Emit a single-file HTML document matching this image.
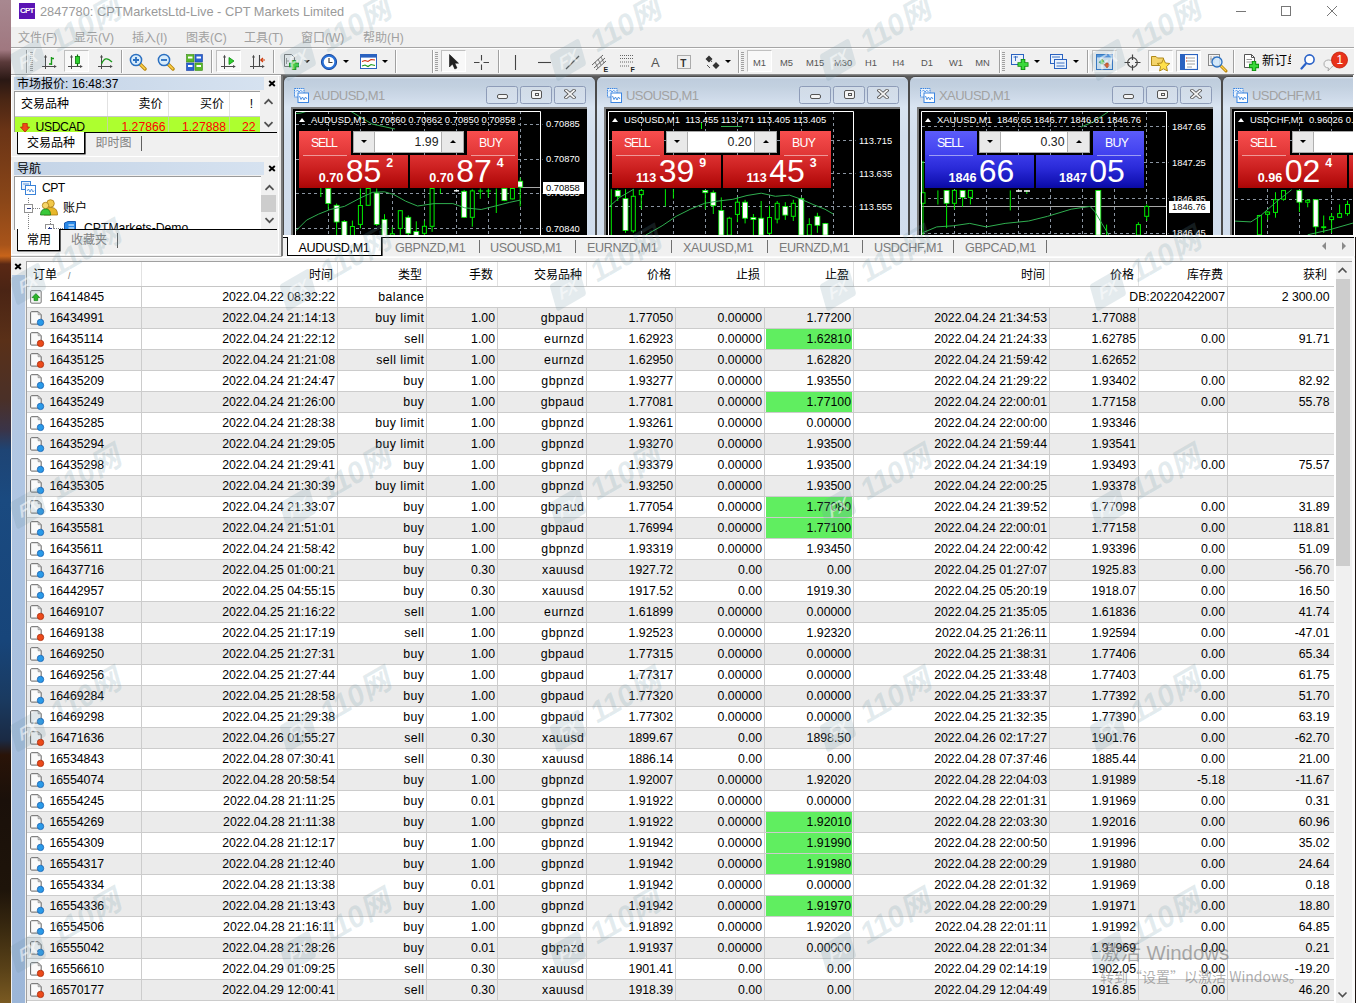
<!DOCTYPE html>
<html><head><meta charset="utf-8"><title>CPT Markets</title>
<style>
html,body{margin:0;padding:0;}
body{width:1356px;height:1003px;overflow:hidden;position:relative;background:#f0f0f0;
 font-family:"Liberation Sans","Noto Sans CJK SC",sans-serif;font-size:12px;color:#000;}
.a{position:absolute;}
.t{position:absolute;white-space:nowrap;line-height:1;}


#strip{left:0;top:0;width:11px;height:1003px;background:linear-gradient(180deg,#a88890 0px,#a07880 50px,#5a3a3a 62px,#2a1814 80px,#4a2614 100px,#6a3416 130px,#8a4618 200px,#a8541a 245px,#c8641a 256px,#5a2814 264px,#4a2414 290px,#5a3018 340px,#4a3028 400px,#3a3448 430px,#1e4474 450px,#1a4a80 500px,#17457a 640px,#1a3a60 700px,#1a2a44 740px,#2a1408 755px,#1a100a 800px,#1e140a 890px,#3a2a10 930px,#5a4218 970px,#7a5a22 1003px);}
#title{left:11px;top:0;width:1345px;height:27px;background:#fff;}
#menu{left:11px;top:27px;width:1343px;height:20px;background:#f0f0f0;}
#menur{left:1354px;top:27px;width:2px;height:50px;background:#fff;}
#tb{left:11px;top:47px;width:1343px;height:28px;background:#f0f0f0;border-top:1px solid #a6a6a6;box-sizing:border-box;}
#tb2{left:11px;top:48px;width:1343px;height:1px;background:#fff;}
.mi{position:absolute;top:32px;font-size:12px;color:#a0a0a0;white-space:nowrap;line-height:13px;}
.sep{position:absolute;top:50px;width:1px;height:23px;background:#a0a0a0;box-shadow:1px 0 0 #fff;}
.grip{position:absolute;top:52px;width:3px;height:20px;background:repeating-linear-gradient(180deg,#a0a0a0 0 1px,transparent 1px 2px);}
.pressed{position:absolute;top:50px;height:22px;box-sizing:border-box;border:1px solid #fff;background:#f8f8f8;border-top-color:#c0c0c0;border-left-color:#c0c0c0;}
.tf{position:absolute;top:57px;font-size:9.4px;color:#555;white-space:nowrap;line-height:11px;transform:translateX(-50%);}
.dd{position:absolute;top:60px;width:0;height:0;border-left:3px solid transparent;border-right:3px solid transparent;border-top:3px solid #000;}
.ico{position:absolute;}


.ptitle{position:absolute;left:14px;width:250px;height:13px;background:linear-gradient(90deg,#c3d3e6,#d6e2f0);}
.pclose{position:absolute;left:267.5px;font-size:13px;font-weight:bold;line-height:13px;}
.pframe{position:absolute;left:11px;width:268px;box-sizing:border-box;border:1px solid #fff;border-top-color:#f0f0f0;background:#f0f0f0;}
.tabact{position:absolute;box-sizing:border-box;background:#fff;border:1px solid #000;border-top:none;box-shadow:0.6px 0.4px 0 #000;}
.sarrow{position:absolute;}


#mdi{left:283px;top:75px;width:1071px;height:160px;background:#5a5a5a;overflow:hidden;}
.cw{position:absolute;top:1px;width:313px;height:170px;box-sizing:border-box;border-radius:6px 6px 0 0;background:linear-gradient(180deg,#e4ebf4 0,#bfcddd 2px,#c3d1e0 10px,#cdd9e8 20px,#d9e4f1 30px,#d3dfee 60px,#d0dcec 100%);border:1px solid #4a4a4a;border-bottom:none;}
.cw .ttl{position:absolute;left:29px;top:11px;font-size:13px;line-height:15px;color:#a2a2a2;letter-spacing:-0.55px;white-space:nowrap;}
.cbtn{position:absolute;top:9px;width:32px;height:18px;box-sizing:border-box;border:1px solid #8e9cb8;border-radius:2.5px;background:linear-gradient(180deg,rgba(255,255,255,0.25),rgba(255,255,255,0.05));}
.blk{position:absolute;left:7px;top:30px;width:296px;height:140px;background:#000;border-left:2px solid #7a7a7a;border-top:2px solid #7a7a7a;box-sizing:border-box;overflow:hidden;}
.ctx{position:absolute;font-size:9.42px;line-height:10px;color:#fff;white-space:nowrap;}
.pl{position:absolute;left:253px;font-size:9.35px;line-height:10px;color:#fff;white-space:nowrap;}
.bs{position:absolute;color:#fff;}
.red{background:linear-gradient(180deg,#dd3232 0%,#cc2020 40%,#b40c0c 85%,#a80606 100%);}
.blu{background:linear-gradient(180deg,#3c3cea 0%,#2a2ad8 40%,#1212b4 85%,#0a0aa4 100%);}
.redt{background:linear-gradient(180deg,#f84e4e 0%,#e03636 100%);}
.blut{background:linear-gradient(180deg,#5c5cfa 0%,#4040ee 100%);}
.big{position:absolute;font-size:32px;line-height:30px;color:#fff;white-space:nowrap;}
.sm{position:absolute;font-size:12.6px;font-weight:bold;line-height:12px;color:#fff;white-space:nowrap;}
.sp{position:absolute;background:#e9e9e9;border:1px solid #a8a8a8;box-sizing:border-box;}


#ctabs{left:283px;top:237px;width:1071px;height:19px;background:#f0f0f0;border-top:1px solid #000;box-sizing:border-box;}
.ctab{position:absolute;top:241.6px;font-size:12.6px;line-height:13px;color:#7a7a7a;white-space:nowrap;letter-spacing:-0.35px;}
.ctsep{position:absolute;top:240px;width:1px;height:13px;background:#707070;}


#term{left:11px;top:256px;width:1345px;height:747px;background:#f0f0f0;}
#tside{left:12px;top:275px;width:13px;height:728px;background:linear-gradient(180deg,#b8cce6,#9cb6d8);}
#tbl{left:26px;top:261px;width:1309px;height:742px;background:#fff;border-left:1px solid #a0a0a0;border-top:1px solid #a0a0a0;box-sizing:border-box;overflow:hidden;}
.row{position:absolute;left:0;width:1307px;height:21px;box-sizing:border-box;border-bottom:1px solid #cccccc;}
.row.g{background:#ebebeb;}
.c{position:absolute;top:0;height:20px;box-sizing:border-box;border-right:1px solid #cccccc;text-align:right;padding-right:2px;font-size:12.3px;line-height:20px;white-space:nowrap;}
.c.nb{border-right:none;padding-right:5.5px;}
.hd .c.nb{padding-right:7px;}
.hd .c{height:24px;line-height:26px;border-right:1px solid #e2e2e2;font-size:12px;padding-right:4px;}
.grn{position:absolute;left:1px;top:0;right:1px;bottom:0;background:#60ee60;}
.ic{position:absolute;left:3px;top:3px;width:15px;height:16px;}


.wm{position:absolute;width:0;height:0;transform:rotate(-30deg);pointer-events:none;}
.wm b{position:absolute;left:-36px;top:-17px;font-size:30px;line-height:32px;font-style:italic;font-weight:bold;color:rgba(110,150,165,0.19);white-space:nowrap;letter-spacing:-0.5px;}
.wm i{position:absolute;left:-82px;top:-13px;width:34px;height:27px;background:rgba(110,150,165,0.19);transform:skewX(-14deg);border-radius:3px;font-size:17px;line-height:27px;font-weight:bold;color:rgba(255,255,255,0.55);text-align:center;letter-spacing:-1px;}
.act{position:absolute;white-space:nowrap;color:rgba(96,96,96,0.5);}
</style></head>
<body>
<div id="strip" class="a"></div>
<div id="title" class="a"></div>
<div id="menu" class="a"></div>
<div id="tb" class="a"></div><div id="tb2" class="a"></div>
<div id="menur" class="a"></div>
<div class="a " style="left:19px;top:3px;width:16px;height:16px;background:#5a14b4;"><div class="t" style="left:1px;top:3.5px;font-size:8px;font-weight:bold;color:#fff;letter-spacing:-0.8px;">CPT</div></div>
<div class="t ttl" style="left:40px;top:4px;font-size:12.8px;color:#9a9a9a;line-height:15px;">2847780: CPTMarketsLtd-Live - CPT Markets Limited</div>
<svg class="a" style="left:1230px;top:0" width="120" height="27" viewBox="0 0 120 27"><path d="M6 11.5 H16" stroke="#777" stroke-width="1"/><rect x="51.5" y="6.5" width="9" height="9" fill="none" stroke="#777" stroke-width="1"/><path d="M97 6 L107 16 M107 6 L97 16" stroke="#777" stroke-width="1"/></svg>
<div class="mi" style="left:18px;">文件(F)</div>
<div class="mi" style="left:74px;">显示(V)</div>
<div class="mi" style="left:132px;">插入(I)</div>
<div class="mi" style="left:186px;">图表(C)</div>
<div class="mi" style="left:244px;">工具(T)</div>
<div class="mi" style="left:301px;">窗口(W)</div>
<div class="mi" style="left:363px;">帮助(H)</div>
<!--TOOLBAR-->
<div class="sep" style="left:26px"></div>
<div class="grip" style="left:30px"></div>
<svg class="ico" style="left:42px;top:54px" width="16" height="16" viewBox="0 0 16 16"><path d="M3.5 2 V15 M0 12.5 H13" stroke="#4a4a4a" stroke-width="1" fill="none"/><path d="M2 3.5 L3.5 0.8 L5 3.5 Z M12 11 L14.8 12.5 L12 14 Z" fill="#4a4a4a"/><path d="M9.5 3 V11 M9.5 4.5 H12 M7 10 H9.5" stroke="#1a9a1a" stroke-width="1.4" fill="none"/></svg>
<div class="pressed" style="left:64px;width:25px"></div>
<svg class="ico" style="left:68px;top:54px" width="16" height="16" viewBox="0 0 16 16"><path d="M3.5 2 V15 M0 12.5 H13" stroke="#4a4a4a" stroke-width="1" fill="none"/><path d="M2 3.5 L3.5 0.8 L5 3.5 Z M12 11 L14.8 12.5 L12 14 Z" fill="#4a4a4a"/><path d="M9.5 0.5 V12" stroke="#0a6a0a" stroke-width="1.2"/><rect x="7.5" y="2.5" width="4" height="7" fill="#2ed02e" stroke="#0a7a0a" stroke-width="0.8"/></svg>
<svg class="ico" style="left:98px;top:54px" width="16" height="16" viewBox="0 0 16 16"><path d="M3.5 2 V15 M0 12.5 H13" stroke="#4a4a4a" stroke-width="1" fill="none"/><path d="M2 3.5 L3.5 0.8 L5 3.5 Z M12 11 L14.8 12.5 L12 14 Z" fill="#4a4a4a"/><path d="M3.5 10 C6 4 9 3 14 8" stroke="#1a9a1a" stroke-width="1.3" fill="none"/></svg>
<div class="sep" style="left:121px"></div>
<svg class="ico" style="left:129px;top:53px" width="18" height="18" viewBox="0 0 18 18"><path d="M10.5 10.5 L16 16" stroke="#b8860b" stroke-width="3.4" stroke-linecap="round"/><path d="M10.8 10.8 L15.8 15.8" stroke="#ffd24a" stroke-width="1.6" stroke-linecap="round"/><circle cx="7" cy="7" r="5.6" fill="#d8ecfb" stroke="#2a6fc0" stroke-width="1.5"/><path d="M4 7 H10 M7 4 V10" stroke="#2a6fc0" stroke-width="1.8"/></svg>
<svg class="ico" style="left:157px;top:53px" width="18" height="18" viewBox="0 0 18 18"><path d="M10.5 10.5 L16 16" stroke="#b8860b" stroke-width="3.4" stroke-linecap="round"/><path d="M10.8 10.8 L15.8 15.8" stroke="#ffd24a" stroke-width="1.6" stroke-linecap="round"/><circle cx="7" cy="7" r="5.6" fill="#d8ecfb" stroke="#2a6fc0" stroke-width="1.5"/><path d="M4 7 H10" stroke="#2a6fc0" stroke-width="1.8"/></svg>
<svg class="ico" style="left:186px;top:54px" width="17" height="17" viewBox="0 0 17 17"><rect x="0.5" y="0.5" width="7.5" height="7.5" fill="#5ab82a" stroke="#3a8a1a" stroke-width="0.6"/><rect x="9" y="0.5" width="7.5" height="7.5" fill="#2a62d0" stroke="#1a42a0" stroke-width="0.6"/><rect x="0.5" y="9" width="7.5" height="7.5" fill="#2a62d0" stroke="#1a42a0" stroke-width="0.6"/><rect x="9" y="9" width="7.5" height="7.5" fill="#5ab82a" stroke="#3a8a1a" stroke-width="0.6"/><path d="M2 3.5 H6.5 M10.5 3.5 H15 M2 12 H6.5 M10.5 12 H15" stroke="#fff" stroke-width="2.2"/></svg>
<div class="sep" style="left:211px"></div>
<div class="pressed" style="left:216px;width:25px"></div>
<svg class="ico" style="left:221px;top:54px" width="16" height="16" viewBox="0 0 16 16"><path d="M3.5 2 V15 M0 12.5 H13" stroke="#4a4a4a" stroke-width="1" fill="none"/><path d="M2 3.5 L3.5 0.8 L5 3.5 Z M12 11 L14.8 12.5 L12 14 Z" fill="#4a4a4a"/><path d="M8 3.5 L13 7 L8 10.5 Z" fill="#2ed02e" stroke="#0a8a0a" stroke-width="0.8"/></svg>
<svg class="ico" style="left:250px;top:54px" width="16" height="16" viewBox="0 0 16 16"><path d="M3.5 2 V15 M0 12.5 H13" stroke="#4a4a4a" stroke-width="1" fill="none"/><path d="M2 3.5 L3.5 0.8 L5 3.5 Z M12 11 L14.8 12.5 L12 14 Z" fill="#4a4a4a"/><path d="M9.5 1 V12" stroke="#444" stroke-width="1.1"/><path d="M15 6 H11 M13 4 L10.8 6 L13 8" stroke="#d03a0a" stroke-width="1.2" fill="none"/></svg>
<div class="sep" style="left:273px"></div>
<svg class="ico" style="left:283px;top:53px" width="18" height="18" viewBox="0 0 18 18"><path d="M1.5 1.5 H8.5 L11.5 4.5 V13.5 H1.5 Z" fill="#f4f4f4" stroke="#777" stroke-width="1"/><path d="M3.5 5 V11 M3.5 8 H6" stroke="#999" stroke-width="1"/><path d="M11 7 V17 M6 12 H16" stroke="#0a8a0a" stroke-width="4.6"/><path d="M11 7.8 V16.2 M6.8 12 H15.2" stroke="#3ad83a" stroke-width="2.8"/></svg>
<div class="dd" style="left:304px"></div>
<svg class="ico" style="left:320px;top:53px" width="18" height="18" viewBox="0 0 18 18"><circle cx="9" cy="9" r="7.6" fill="#2a72d8" stroke="#1a4aa0" stroke-width="1"/><circle cx="9" cy="9" r="5.3" fill="#fff"/><path d="M9 5 V9.5 H12.5" stroke="#444" stroke-width="1.2" fill="none"/></svg>
<div class="dd" style="left:343px"></div>
<svg class="ico" style="left:360px;top:54px" width="17" height="16" viewBox="0 0 17 16"><rect x="0.5" y="0.5" width="16" height="14" fill="#fff" stroke="#2a62c0" stroke-width="1"/><rect x="1" y="1" width="15" height="2.6" fill="#2a62c0"/><path d="M2 7.5 L5 6.5 L8 7.5 L11 5.5 L15 6" stroke="#d02a0a" stroke-width="1.1" fill="none"/><path d="M2 12 L5 11 L8 12.5 L11 10.5 L15 11.5" stroke="#1a9a1a" stroke-width="1.1" fill="none"/></svg>
<div class="dd" style="left:382px"></div>
<div class="sep" style="left:395px"></div>
<div class="sep" style="left:432px"></div>
<div class="grip" style="left:435px"></div>
<div class="pressed" style="left:441px;width:25px"></div>
<svg class="ico" style="left:448px;top:54px" width="12" height="17" viewBox="0 0 12 17"><path d="M1.5 0.5 V13 L4.5 10 L6.8 15 L9 14 L6.8 9.2 H10.5 Z" fill="#222" stroke="#000" stroke-width="0.5"/></svg>
<svg class="ico" style="left:473px;top:54px" width="17" height="17" viewBox="0 0 17 17"><path d="M8.5 1 V6.5 M8.5 10.5 V16 M1 8.5 H6.5 M10.5 8.5 H16" stroke="#444" stroke-width="1.1"/></svg>
<div class="sep" style="left:498px"></div>
<svg class="ico" style="left:514px;top:55px" width="3" height="15" viewBox="0 0 3 15"><path d="M1.5 0 V15" stroke="#444" stroke-width="1.1"/></svg>
<svg class="ico" style="left:538px;top:61px" width="13" height="3" viewBox="0 0 13 3"><path d="M0 1.5 H13" stroke="#444" stroke-width="1.1"/></svg>
<svg class="ico" style="left:565px;top:55px" width="15" height="15" viewBox="0 0 15 15"><path d="M1 14 L14 1" stroke="#555" stroke-width="1.2"/></svg>
<svg class="ico" style="left:591px;top:53px" width="19" height="19" viewBox="0 0 19 19"><path d="M1 12 L12 2 M3 15 L14 5 M5 17 L15 8" stroke="#555" stroke-width="0.9"/><path d="M4 9 L7 15 M7 6 L10 12 M10 4 L13 10" stroke="#555" stroke-width="0.7"/><text x="12.5" y="18.5" font-size="7" font-weight="bold" font-family="Liberation Sans,sans-serif" fill="#222">E</text></svg>
<svg class="ico" style="left:620px;top:54px" width="18" height="19" viewBox="0 0 18 19"><path d="M0 1.5 H14 M0 4.5 H14 M0 8 H14 M0 12 H9" stroke="#555" stroke-width="0.9" stroke-dasharray="1 1"/><text x="10.5" y="17.5" font-size="7" font-weight="bold" font-family="Liberation Sans,sans-serif" fill="#222">F</text></svg>
<div class="t " style="left:651px;top:55.5px;font-size:13px;color:#555;">A</div>
<svg class="ico" style="left:677px;top:55px" width="15" height="15" viewBox="0 0 15 15"><rect x="0.5" y="0.5" width="13" height="13" fill="none" stroke="#555" stroke-width="0.9" stroke-dasharray="1 1"/><text x="3.2" y="11.5" font-size="10" font-weight="bold" font-family="Liberation Sans,sans-serif" fill="#333">T</text></svg>
<svg class="ico" style="left:704px;top:54px" width="18" height="17" viewBox="0 0 18 17"><path d="M5 1.5 L8.5 5 L5 8.5 L1.5 5 Z M12 8 L15.5 11.5 L12 15 L8.5 11.5 Z" fill="#333"/><path d="M3 11 L6 14 M5.5 5 L8 8" stroke="#555" stroke-width="1"/></svg>
<div class="dd" style="left:725px"></div>
<div class="sep" style="left:738px"></div>
<div class="grip" style="left:741px"></div>
<div class="pressed" style="left:747px;width:25px"></div>
<div class="tf" style="left:759.5px">M1</div>
<div class="tf" style="left:786.5px">M5</div>
<div class="tf" style="left:815px">M15</div>
<div class="tf" style="left:843px">M30</div>
<div class="tf" style="left:871px">H1</div>
<div class="tf" style="left:898.5px">H4</div>
<div class="tf" style="left:927px">D1</div>
<div class="tf" style="left:956px">W1</div>
<div class="tf" style="left:982.5px">MN</div>
<div class="sep" style="left:999px"></div>
<div class="grip" style="left:1002px"></div>
<svg class="ico" style="left:1011px;top:53px" width="18" height="18" viewBox="0 0 18 18"><rect x="0.5" y="1.5" width="12" height="10" fill="#eaf2fc" stroke="#2a62c0" stroke-width="1"/><path d="M2.5 4 H7 M4.5 3 V8" stroke="#2a62c0" stroke-width="0.9"/><path d="M12 6 V17 M6.5 11.5 H17.5" stroke="#0a8a0a" stroke-width="4.6"/><path d="M12 6.8 V16.2 M7.3 11.5 H16.7" stroke="#3ad83a" stroke-width="2.8"/></svg>
<div class="dd" style="left:1034px"></div>
<svg class="ico" style="left:1050px;top:53px" width="18" height="18" viewBox="0 0 18 18"><rect x="0.5" y="1.5" width="12" height="9" fill="#eaf2fc" stroke="#2a62c0" stroke-width="1"/><rect x="4.5" y="6.5" width="12" height="9" fill="#eaf2fc" stroke="#2a62c0" stroke-width="1"/><path d="M2 4 H10 M6.5 10 H14.5 M6.5 13 H14.5" stroke="#2a62c0" stroke-width="0.9"/></svg>
<div class="dd" style="left:1073px"></div>
<div class="sep" style="left:1087px"></div>
<div class="pressed" style="left:1092px;width:25px"></div>
<svg class="ico" style="left:1096px;top:54px" width="17" height="16" viewBox="0 0 17 16"><rect x="0.5" y="0.5" width="16" height="15" fill="#dcecfb" stroke="#2a72c8" stroke-width="1"/><rect x="1" y="1" width="15" height="2.4" fill="#4a92e0"/><path d="M6 5 L8.8 8.4 H7.2 V10 H4.8 V8.4 H3.2 Z" fill="#2aba2a" stroke="#0a7a0a" stroke-width="0.5"/><path d="M11 14 L8.2 10.6 H9.8 V9 H12.2 V10.6 H13.8 Z" fill="#f05a1a" stroke="#a02a00" stroke-width="0.5"/></svg>
<svg class="ico" style="left:1124px;top:54px" width="17" height="17" viewBox="0 0 17 17"><circle cx="8.5" cy="8.5" r="4.8" fill="none" stroke="#444" stroke-width="1.2"/><path d="M8.5 0.5 V6 M8.5 11 V16.5 M0.5 8.5 H6 M11 8.5 H16.5" stroke="#444" stroke-width="1.2"/></svg>
<div class="pressed" style="left:1148px;width:25px"></div>
<svg class="ico" style="left:1151px;top:53px" width="20" height="19" viewBox="0 0 20 19"><path d="M0.5 3.5 H5 L6.5 5 H12.5 V12.5 H0.5 Z" fill="#f4d46a" stroke="#b08a1a" stroke-width="1"/><path d="M12.5 6 L14.4 10 L18.8 10.5 L15.5 13.5 L16.4 18 L12.5 15.8 L8.6 18 L9.5 13.5 L6.2 10.5 L10.6 10 Z" fill="#ffe04a" stroke="#b08a1a" stroke-width="1"/></svg>
<div class="pressed" style="left:1176px;width:25px"></div>
<svg class="ico" style="left:1180px;top:54px" width="18" height="16" viewBox="0 0 18 16"><rect x="0.5" y="0.5" width="17" height="15" fill="#fff" stroke="#2a62c0" stroke-width="1.2"/><rect x="1" y="1" width="4" height="14" fill="#2a62c0"/><path d="M7 4 H15 M7 7 H15 M7 10 H15 M7 13 H12" stroke="#888" stroke-width="0.8"/><path d="M6 4 H7 M6 7 H7" stroke="#d02a0a" stroke-width="1"/></svg>
<svg class="ico" style="left:1208px;top:53px" width="20" height="20" viewBox="0 0 20 20"><rect x="0.5" y="1.5" width="11" height="11" fill="#f4f4f4" stroke="#888" stroke-width="1"/><path d="M3 3 V10 M6 3 V10 M2 6 H8" stroke="#999" stroke-width="0.8"/><path d="M12.5 12.5 L18 18" stroke="#b8860b" stroke-width="3" stroke-linecap="round"/><path d="M12.8 12.8 L17.6 17.6" stroke="#ffd24a" stroke-width="1.3" stroke-linecap="round"/><circle cx="9" cy="9" r="5" fill="#cfe6fa" fill-opacity="0.85" stroke="#2a6fc0" stroke-width="1.3"/></svg>
<div class="sep" style="left:1233px"></div>
<svg class="ico" style="left:1243px;top:53px" width="18" height="19" viewBox="0 0 18 19"><path d="M1.5 1.5 H8.5 L11.5 4.5 V14.5 H1.5 Z" fill="#fff" stroke="#555" stroke-width="1"/><path d="M8.5 1.5 V4.5 H11.5" fill="none" stroke="#555"/><path d="M3.5 6.5 H9 M3.5 9 H9" stroke="#888" stroke-width="0.9"/><path d="M11 8 V18 M6 13 H16" stroke="#0a8a0a" stroke-width="4.4"/><path d="M11 8.8 V17.2 M6.8 13 H15.2" stroke="#3ad83a" stroke-width="2.6"/></svg>
<div class="a" style="left:1262px;top:53px;width:29px;height:16px;overflow:hidden;"><div class="t" style="left:0;top:1px;font-size:12.5px;line-height:14px;">新订单</div></div>
<svg class="ico" style="left:1300px;top:53px" width="16" height="17" viewBox="0 0 16 17"><path d="M6 10.5 L1.5 15.5" stroke="#2a62c8" stroke-width="2.2" stroke-linecap="round"/><circle cx="9.5" cy="6.5" r="4.6" fill="#fff" stroke="#2a62c8" stroke-width="1.6"/></svg>
<svg class="ico" style="left:1322px;top:50px" width="28" height="24" viewBox="0 0 28 24"><path d="M2 14 a5 4 0 1 1 7 3.6 L6 21 L6.5 18 A5 4 0 0 1 2 14 Z" fill="#f4f4f4" stroke="#aaa" stroke-width="1"/><circle cx="17.5" cy="10" r="8" fill="#e8321a"/><circle cx="17.5" cy="10" r="8" fill="none" stroke="#c0200a" stroke-width="0.8"/><text x="14.6" y="14.4" font-size="12" font-family="Liberation Sans,sans-serif" fill="#fff">1</text></svg>
<div class="a " style="left:281px;top:76px;width:2px;height:180px;background:#7a7a7a;"></div>
<div class="a " style="left:279px;top:76px;width:2px;height:180px;background:#e8e8e8;"></div>
<div class="pframe" style="top:76px;height:81px;"></div>
<div class="ptitle" style="top:77px;"></div>
<div class="t " style="left:17px;top:77.5px;font-size:12px;line-height:12px;">市场报价: 16:48:37</div>
<svg class="a" style="left:268px;top:80px" width="8" height="7" viewBox="0 0 8 7"><path d="M1.2 1 L6.8 6 M6.8 1 L1.2 6" stroke="#000" stroke-width="1.9"/></svg>
<div class="a " style="left:14px;top:91px;width:246px;height:41px;background:#fff;border-left:1px solid #9a9a9a;border-top:1px solid #9a9a9a;box-sizing:border-box;"></div>
<div class="a " style="left:260px;top:92px;width:18px;height:40px;background:#f0f0f0;"></div>
<div class="a " style="left:107px;top:92px;width:1px;height:24px;background:#e2e2e2;"></div>
<div class="a " style="left:168px;top:92px;width:1px;height:24px;background:#e2e2e2;"></div>
<div class="a " style="left:229px;top:92px;width:1px;height:24px;background:#e2e2e2;"></div>
<div class="a " style="left:15px;top:116px;width:245px;height:1px;background:#c8c8c8;"></div>
<div class="a " style="left:15px;top:117px;width:245px;height:15px;background:#adff2f;"></div>
<div class="a " style="left:107px;top:117px;width:1px;height:15px;background:#c4d89a;"></div>
<div class="a " style="left:168px;top:117px;width:1px;height:15px;background:#c4d89a;"></div>
<div class="a " style="left:229px;top:117px;width:1px;height:15px;background:#c4d89a;"></div>
<div class="t " style="left:21px;top:98px;font-size:12px;line-height:12px;">交易品种</div>
<div class="t " style="right:1193.5px;top:98px;font-size:12px;line-height:12px;">卖价</div>
<div class="t " style="right:1132px;top:98px;font-size:12px;line-height:12px;">买价</div>
<div class="t " style="right:1103px;top:98px;font-size:12px;line-height:12px;">!</div>
<div class="a" style="left:15px;top:117px;width:245px;height:15px;overflow:hidden;"><svg class="a" style="left:4.5px;top:6px" width="10" height="10" viewBox="0 0 11 11"><path d="M3 0.5 H8 V4.5 H10.5 L5.5 10 L0.5 4.5 H3 Z" fill="#f04a1a" stroke="#b02000" stroke-width="0.8"/></svg><div class="t" style="left:20.5px;top:4px;font-size:12.2px;line-height:13px;letter-spacing:-0.4px;">USDCAD</div><div class="t" style="right:94.5px;top:4px;font-size:12.2px;line-height:13px;color:#f00;">1.27866</div><div class="t" style="right:34px;top:4px;font-size:12.2px;line-height:13px;color:#f00;">1.27888</div><div class="t" style="right:4.5px;top:4px;font-size:12.2px;line-height:13px;color:#f00;">22</div></div>
<svg class="sarrow" style="left:263px;top:98px" width="11" height="7" viewBox="0 0 11 7"><path d="M1.5 5.8 L5.5 1.8 L9.5 5.8" fill="none" stroke="#505050" stroke-width="1.7"/></svg>
<svg class="sarrow" style="left:263px;top:121px" width="11" height="7" viewBox="0 0 11 7"><path d="M1.5 1.2 L5.5 5.2 L9.5 1.2" fill="none" stroke="#505050" stroke-width="1.7"/></svg>
<div class="a " style="left:84px;top:132px;width:193px;height:1px;background:#000;"></div>
<div class="tabact" style="left:17px;top:132px;width:68px;height:21.5px;"></div>
<div class="t " style="left:27px;top:137px;font-size:12px;line-height:12px;">交易品种</div>
<div class="t " style="left:95.5px;top:137px;font-size:12px;line-height:12px;color:#808080;">即时图</div>
<div class="a " style="left:141px;top:136px;width:1px;height:15px;background:#606060;"></div>
<div class="pframe" style="top:160px;height:95px;"></div>
<div class="ptitle" style="top:162px;"></div>
<div class="t " style="left:17px;top:162.5px;font-size:12px;line-height:12px;">导航</div>
<svg class="a" style="left:268px;top:165px" width="8" height="7" viewBox="0 0 8 7"><path d="M1.2 1 L6.8 6 M6.8 1 L1.2 6" stroke="#000" stroke-width="1.9"/></svg>
<div class="a " style="left:14px;top:176px;width:247px;height:54px;background:#fff;border-left:1px solid #9a9a9a;border-top:1px solid #9a9a9a;box-sizing:border-box;"></div>
<div class="a " style="left:261px;top:177px;width:17px;height:53px;background:#f0f0f0;"></div>
<div class="a " style="left:261px;top:195px;width:15px;height:17px;background:#cdcdcd;"></div>
<svg class="sarrow" style="left:263.5px;top:183.5px" width="11" height="7" viewBox="0 0 11 7"><path d="M1.5 5.8 L5.5 1.8 L9.5 5.8" fill="none" stroke="#505050" stroke-width="1.7"/></svg>
<svg class="sarrow" style="left:263.5px;top:217px" width="11" height="7" viewBox="0 0 11 7"><path d="M1.5 1.2 L5.5 5.2 L9.5 1.2" fill="none" stroke="#505050" stroke-width="1.7"/></svg>
<svg class="a" style="left:21px;top:180.5px" width="15" height="14" viewBox="0 0 15 14"><rect x="0.5" y="0.5" width="9" height="8" fill="#e8f2fc" stroke="#3a82d8" stroke-width="1"/><path d="M2 3 H8" stroke="#3a82d8" stroke-width="0.8"/><rect x="4.5" y="4.5" width="10" height="9" fill="#fff" stroke="#3a82d8" stroke-width="1"/><path d="M6 10 L7.5 8 L9 11 L10.5 8 L12 11 L13 9.5" stroke="#3a82d8" stroke-width="0.8" fill="none"/></svg>
<div class="t " style="left:42px;top:182px;font-size:12.2px;line-height:13px;letter-spacing:-0.6px;">CPT</div>
<div class="a " style="left:28px;top:198px;width:1px;height:32px;background:repeating-linear-gradient(180deg,#808080 0 1px,transparent 1px 2px);"></div>
<div class="a " style="left:33px;top:208px;width:7px;height:1px;background:repeating-linear-gradient(90deg,#808080 0 1px,transparent 1px 2px);"></div>
<div class="a " style="left:24px;top:203.5px;width:9px;height:9px;background:#fff;border:1px solid #919191;box-sizing:border-box;"><div class="a" style="left:1.5px;top:3px;width:4px;height:1px;background:#2a3a8a;"></div></div>
<svg class="a" style="left:40px;top:199px" width="18" height="17" viewBox="0 0 18 17"><circle cx="10.5" cy="4.5" r="3.8" fill="#f2c84a" stroke="#a87a10" stroke-width="0.8"/><path d="M4 16 C4 10 7 8.5 10.5 8.5 C14.5 8.5 17.5 10 17.5 16 Z" fill="#e8b82a" stroke="#a87a10" stroke-width="0.8"/><circle cx="5.5" cy="6.5" r="3.2" fill="#f6d66a" stroke="#a87a10" stroke-width="0.8"/><path d="M0.5 16 C0.5 11.5 3 10 5.5 10 C8.5 10 10.5 11.5 10.5 16 Z" fill="#3ac83a" stroke="#1a7a1a" stroke-width="0.8"/></svg>
<div class="t " style="left:63px;top:202px;font-size:12px;line-height:12px;">账户</div>
<div class="a" style="left:15px;top:219px;width:246px;height:11px;overflow:hidden;"><div class="a" style="left:30px;top:5px;width:9px;height:9px;background:#fff;border:1px solid #919191;box-sizing:border-box;"><div class="a" style="left:1.5px;top:3px;width:4px;height:1px;background:#2a3a8a;"></div><div class="a" style="left:3px;top:1.5px;width:1px;height:4px;background:#2a3a8a;"></div></div><div class="a" style="left:39px;top:9px;width:9px;height:1px;background:repeating-linear-gradient(90deg,#808080 0 1px,transparent 1px 2px);"></div><div class="a" style="left:34.5px;top:0;width:1px;height:5px;background:repeating-linear-gradient(180deg,#808080 0 1px,transparent 1px 2px);"></div><svg class="a" style="left:49px;top:2px" width="13" height="12" viewBox="0 0 13 12"><path d="M0.5 2 L4 0.5 H11.5 V12 H0.5 Z" fill="#2a8ae8" stroke="#1a5ab0" stroke-width="1"/><path d="M4.5 4 H10 M4.5 7 H10 M4.5 10 H10" stroke="#fff" stroke-width="1.1"/></svg><div class="t" style="left:69px;top:3px;font-size:12.2px;line-height:13px;">CPTMarkets-Demo</div></div>
<div class="a " style="left:59px;top:229px;width:218px;height:1px;background:#000;"></div>
<div class="tabact" style="left:17px;top:229px;width:43px;height:22px;"></div>
<div class="t " style="left:27px;top:234px;font-size:12px;line-height:12px;">常用</div>
<div class="t " style="left:71px;top:234px;font-size:12px;line-height:12px;color:#808080;">收藏夹</div>
<div class="a " style="left:117px;top:233px;width:1px;height:15px;background:#606060;"></div>
<div id="mdi" class="a"><div class="cw" style="left:0px;"><svg class="a" style="left:10px;top:11px" width="15" height="15" viewBox="0 0 15 15"><rect x="0.5" y="0.5" width="9.5" height="8.5" fill="#eaf3fd" stroke="#3a84e0" stroke-width="1" stroke-dasharray="1.5 0.7"/><path d="M2 3.5 L3.5 2 L5 4 L6.5 2.5 L8.5 3.5" stroke="#3a84e0" stroke-width="0.8" fill="none"/><rect x="4" y="5" width="10.5" height="9.5" fill="#fff" stroke="#3a84e0" stroke-width="1"/><path d="M5.5 8 L7 11.5 L8.5 9 L10 12 L11.5 9 L13 11" stroke="#3a84e0" stroke-width="0.9" fill="none"/></svg><div class="ttl">AUDUSD,M1</div><div class="cbtn" style="left:202px;"><div class="a" style="left:9.5px;top:6.8px;width:11px;height:5px;border:1px solid #555;border-radius:2px;background:#f4f4f4;box-sizing:border-box;"></div></div><div class="cbtn" style="left:236px;"><div class="a" style="left:10px;top:2.8px;width:11px;height:9px;border:1px solid #555;border-radius:2px;background:#f4f4f4;box-sizing:border-box;"><div class="a" style="left:2.5px;top:2px;width:4px;height:3px;border:1px solid #555;box-sizing:border-box;"></div></div></div><div class="cbtn" style="left:270px;"><svg class="a" style="left:9px;top:2.4px" width="12" height="10" viewBox="0 0 12 10"><path d="M2 1.5 L10 8.5 M10 1.5 L2 8.5" stroke="#555" stroke-width="3.4" stroke-linecap="square"/><path d="M2 1.5 L10 8.5 M10 1.5 L2 8.5" stroke="#f4f4f4" stroke-width="1.7" stroke-linecap="square"/></svg></div><div class="blk"><svg class="a" style="left:0;top:0" width="294" height="140" viewBox="0 0 294 140"><path d="M35.5 2 V140" stroke="#8a94a0" stroke-width="1" stroke-dasharray="3 3"/><path d="M67.5 2 V140" stroke="#8a94a0" stroke-width="1" stroke-dasharray="3 3"/><path d="M99.5 2 V140" stroke="#8a94a0" stroke-width="1" stroke-dasharray="3 3"/><path d="M131.5 2 V140" stroke="#8a94a0" stroke-width="1" stroke-dasharray="3 3"/><path d="M163.5 2 V140" stroke="#8a94a0" stroke-width="1" stroke-dasharray="3 3"/><path d="M195.5 2 V140" stroke="#8a94a0" stroke-width="1" stroke-dasharray="3 3"/><path d="M227.5 2 V140" stroke="#8a94a0" stroke-width="1" stroke-dasharray="3 3"/><path d="M3 15.5 H249.5" stroke="#8a94a0" stroke-width="1" stroke-dasharray="3 3"/><path d="M3 50.5 H249.5" stroke="#8a94a0" stroke-width="1" stroke-dasharray="3 3"/><path d="M3 84.5 H249.5" stroke="#8a94a0" stroke-width="1" stroke-dasharray="3 3"/><path d="M3 119.5 H249.5" stroke="#8a94a0" stroke-width="1" stroke-dasharray="3 3"/><path d="M227 78.5 H247.5" stroke="#a8a8a8" stroke-width="1"/><path d="M27.8 78.1 V88" stroke="#00ee00" stroke-width="1"/><path d="M35.3 78.1 V100.5" stroke="#00ee00" stroke-width="1"/><rect x="32.8" y="79.5" width="5" height="15.1" fill="#fff" stroke="#00ee00" stroke-width="0.8"/><path d="M43.6 94.6 V126.5" stroke="#00ee00" stroke-width="1"/><rect x="41.1" y="96.3" width="5" height="16.7" fill="#fff" stroke="#00ee00" stroke-width="0.8"/><path d="M51.4 111.1 V126.5" stroke="#00ee00" stroke-width="1"/><rect x="48.9" y="112.5" width="5" height="14" fill="#fff" stroke="#00ee00" stroke-width="0.8"/><path d="M59.4 111.6 V126.5" stroke="#00ee00" stroke-width="1"/><rect x="57.4" y="117.5" width="4" height="9" fill="#000" stroke="#00ee00" stroke-width="1"/><path d="M67.4 79.5 V119.4" stroke="#00ee00" stroke-width="1"/><rect x="65.4" y="96.5" width="4" height="18.9" fill="#000" stroke="#00ee00" stroke-width="1"/><path d="M75.2 78.1 V97" stroke="#00ee00" stroke-width="1"/><rect x="73.2" y="79.5" width="4" height="16.8" fill="#000" stroke="#00ee00" stroke-width="1"/><path d="M83.7 79.5 V117" stroke="#00ee00" stroke-width="1"/><rect x="81.2" y="84" width="5" height="31.4" fill="#fff" stroke="#00ee00" stroke-width="0.8"/><path d="M91.5 105.2 V126.5" stroke="#00ee00" stroke-width="1"/><rect x="89" y="110.6" width="5" height="15.9" fill="#fff" stroke="#00ee00" stroke-width="0.8"/><path d="M99.3 118.2 V126.5" stroke="#00ee00" stroke-width="1"/><rect x="97.3" y="124.8" width="4" height="1.7" fill="#000" stroke="#00ee00" stroke-width="1"/><path d="M107.3 101.2 V126.5" stroke="#00ee00" stroke-width="1"/><rect x="105.3" y="101.7" width="4" height="17.7" fill="#000" stroke="#00ee00" stroke-width="1"/><path d="M115.3 106.4 V126.5" stroke="#00ee00" stroke-width="1"/><rect x="112.8" y="108.3" width="5" height="16" fill="#fff" stroke="#00ee00" stroke-width="0.8"/><path d="M123.3 112.3 V126.5" stroke="#00ee00" stroke-width="1"/><rect x="120.8" y="122.4" width="5" height="4.1" fill="#fff" stroke="#00ee00" stroke-width="0.8"/><path d="M131.4 111.6 V126.5" stroke="#00ee00" stroke-width="1"/><rect x="129.4" y="117.3" width="4" height="7" fill="#000" stroke="#00ee00" stroke-width="1"/><path d="M139.1 79.5 V122.9" stroke="#00ee00" stroke-width="1"/><rect x="137.1" y="79.5" width="4" height="37.8" fill="#000" stroke="#00ee00" stroke-width="1"/><path d="M147.4 79.5 V84.7" stroke="#00ee00" stroke-width="1"/><path d="M171.2 80.9 V108.8" stroke="#00ee00" stroke-width="1"/><rect x="168.7" y="82.3" width="5" height="26" fill="#fff" stroke="#00ee00" stroke-width="0.8"/><path d="M179.3 80.4 V117.7" stroke="#00ee00" stroke-width="1"/><rect x="177.3" y="81.9" width="4" height="26.4" fill="#000" stroke="#00ee00" stroke-width="1"/><path d="M187.3 79.5 V89.9" stroke="#00ee00" stroke-width="1"/><path d="M195.3 79.5 V88.5" stroke="#00ee00" stroke-width="1"/><path d="M203.3 79.5 V104" stroke="#00ee00" stroke-width="1"/><path d="M211.4 79.5 V92.2" stroke="#00ee00" stroke-width="1"/><rect x="208.9" y="79.5" width="5" height="12" fill="#fff" stroke="#00ee00" stroke-width="0.8"/><path d="M219.4 79.5 V90.4" stroke="#00ee00" stroke-width="1"/><rect x="217.4" y="79.5" width="4" height="10.4" fill="#000" stroke="#00ee00" stroke-width="1"/><path d="M227.2 68.6 V97.4" stroke="#00ee00" stroke-width="1"/><rect x="224.7" y="72.2" width="5" height="5.9" fill="#fff" stroke="#00ee00" stroke-width="0.8"/><path d="M3 121.7 L13.6 111.1 L25.4 105.2 L37.2 100.5 L51.4 97.4 L67.9 88.7 L79.7 83.3 L91.5 82.8 L100.9 85.6 L112.7 92.2 L124.5 97 L141 94.6 L159.9 94.6 L171.7 98.8 L188.2 100.5 L202.4 97 L216.5 93.4 L227.2 91.1" fill="none" stroke="#2fae4f" stroke-width="1"/><path d="M3 4.5 L8 4 L13 2.5 M58 2.5 L69 9 L79 15 L102 20" fill="none" stroke="#2fae4f" stroke-width="1"/><path d="M185 82 H190 M193 82 H198" stroke="#00ee00" stroke-width="1"/><path d="M161 81.8 H166" stroke="#fff" stroke-width="1.4"/><path d="M2.5 140 V2.5 H247.5 V140" fill="none" stroke="#fff" stroke-width="1"/></svg><div class="a" style="left:6px;top:9px;width:0;height:0;border-left:3.5px solid transparent;border-right:3.5px solid transparent;border-bottom:4px solid #fff;"></div><div class="ctx" style="left:18px;top:6px;">AUDUSD,M1&nbsp; 0.70860 0.70862 0.70850 0.70858</div><div class="pl" style="top:10px;">0.70885</div><div class="pl" style="top:45px;">0.70870</div><div class="pl" style="top:79px;">0.70855</div><div class="a" style="left:250px;top:72.5px;width:41px;height:12px;background:#fff;"></div><div class="pl" style="top:73.5px;color:#000;">0.70858</div><div class="pl" style="top:114.5px;">0.70840</div><div class="a red" style="left:6px;top:46px;width:108.5px;height:33px;"></div><div class="a red" style="left:116.5px;top:46px;width:108.5px;height:33px;"></div><div class="a redt" style="left:6px;top:22px;width:52px;height:24px;"></div><div class="a redt" style="left:174px;top:22px;width:51px;height:24px;"></div><div class="a" style="left:10px;top:46px;width:44px;height:1px;background:rgba(255,255,255,0.5);"></div><div class="a" style="left:177.5px;top:46px;width:44px;height:1px;background:rgba(255,255,255,0.5);"></div><div class="bs" style="left:18px;top:27.5px;font-size:12.3px;line-height:13px;letter-spacing:-1.1px;">SELL</div><div class="bs" style="left:186px;top:27.5px;font-size:12.3px;line-height:13px;letter-spacing:-0.7px;">BUY</div><div class="sp" style="left:59.7px;top:22px;width:111.5px;height:22px;"></div><div class="a" style="left:81px;top:23px;width:68px;height:20px;background:#fff;border-left:1px solid #b0b0b0;border-right:1px solid #b0b0b0;box-sizing:border-box;"></div><div class="a" style="left:68px;top:31px;width:0;height:0;border-left:3px solid transparent;border-right:3px solid transparent;border-top:3.5px solid #000;"></div><div class="a" style="left:157px;top:30.5px;width:0;height:0;border-left:3px solid transparent;border-right:3px solid transparent;border-bottom:3.5px solid #000;"></div><div class="t" style="right:148.5px;top:26.5px;font-size:12.3px;line-height:13px;color:#222;">1.99</div><div class="sm" style="right:243.8px;top:63.4px;">0.70</div><div class="big" style="left:52.7px;top:47.2px;">85</div><div class="sm" style="left:93.2px;top:47.6px;font-size:12.4px;">2</div><div class="sm" style="right:133.3px;top:63.4px;">0.70</div><div class="big" style="left:163.2px;top:47.2px;">87</div><div class="sm" style="left:203.7px;top:47.6px;font-size:12.4px;">4</div></div></div><div class="cw" style="left:313px;"><svg class="a" style="left:10px;top:11px" width="15" height="15" viewBox="0 0 15 15"><rect x="0.5" y="0.5" width="9.5" height="8.5" fill="#eaf3fd" stroke="#3a84e0" stroke-width="1" stroke-dasharray="1.5 0.7"/><path d="M2 3.5 L3.5 2 L5 4 L6.5 2.5 L8.5 3.5" stroke="#3a84e0" stroke-width="0.8" fill="none"/><rect x="4" y="5" width="10.5" height="9.5" fill="#fff" stroke="#3a84e0" stroke-width="1"/><path d="M5.5 8 L7 11.5 L8.5 9 L10 12 L11.5 9 L13 11" stroke="#3a84e0" stroke-width="0.9" fill="none"/></svg><div class="ttl">USOUSD,M1</div><div class="cbtn" style="left:202px;"><div class="a" style="left:9.5px;top:6.8px;width:11px;height:5px;border:1px solid #555;border-radius:2px;background:#f4f4f4;box-sizing:border-box;"></div></div><div class="cbtn" style="left:236px;"><div class="a" style="left:10px;top:2.8px;width:11px;height:9px;border:1px solid #555;border-radius:2px;background:#f4f4f4;box-sizing:border-box;"><div class="a" style="left:2.5px;top:2px;width:4px;height:3px;border:1px solid #555;box-sizing:border-box;"></div></div></div><div class="cbtn" style="left:270px;"><svg class="a" style="left:9px;top:2.4px" width="12" height="10" viewBox="0 0 12 10"><path d="M2 1.5 L10 8.5 M10 1.5 L2 8.5" stroke="#555" stroke-width="3.4" stroke-linecap="square"/><path d="M2 1.5 L10 8.5 M10 1.5 L2 8.5" stroke="#f4f4f4" stroke-width="1.7" stroke-linecap="square"/></svg></div><div class="blk"><svg class="a" style="left:0;top:0" width="294" height="140" viewBox="0 0 294 140"><path d="M35.5 2 V140" stroke="#8a94a0" stroke-width="1" stroke-dasharray="3 3"/><path d="M67.5 2 V140" stroke="#8a94a0" stroke-width="1" stroke-dasharray="3 3"/><path d="M99.5 2 V140" stroke="#8a94a0" stroke-width="1" stroke-dasharray="3 3"/><path d="M131.5 2 V140" stroke="#8a94a0" stroke-width="1" stroke-dasharray="3 3"/><path d="M163.5 2 V140" stroke="#8a94a0" stroke-width="1" stroke-dasharray="3 3"/><path d="M195.5 2 V140" stroke="#8a94a0" stroke-width="1" stroke-dasharray="3 3"/><path d="M227.5 2 V140" stroke="#8a94a0" stroke-width="1" stroke-dasharray="3 3"/><path d="M3 31.5 H249.5" stroke="#8a94a0" stroke-width="1" stroke-dasharray="3 3"/><path d="M3 64.5 H249.5" stroke="#8a94a0" stroke-width="1" stroke-dasharray="3 3"/><path d="M3 97.5 H249.5" stroke="#8a94a0" stroke-width="1" stroke-dasharray="3 3"/><path d="M5.3 80.2 V126.2" stroke="#00ee00" stroke-width="1"/><path d="M11.7 80.2 V92" stroke="#00ee00" stroke-width="1"/><rect x="9.2" y="81.4" width="5" height="5.9" fill="#fff" stroke="#00ee00" stroke-width="0.8"/><path d="M19.5 80.2 V123.8" stroke="#00ee00" stroke-width="1"/><rect x="17" y="89.6" width="5" height="31.9" fill="#fff" stroke="#00ee00" stroke-width="0.8"/><path d="M27.3 80.2 V123.8" stroke="#00ee00" stroke-width="1"/><rect x="25.3" y="87.3" width="4" height="34.6" fill="#000" stroke="#00ee00" stroke-width="1"/><path d="M35.3 80.2 V100.2" stroke="#00ee00" stroke-width="1"/><rect x="33.3" y="81.4" width="4" height="4.2" fill="#000" stroke="#00ee00" stroke-width="1"/><path d="M59.4 80.2 V97.4" stroke="#00ee00" stroke-width="1"/><path d="M67.4 80.2 V89.6" stroke="#00ee00" stroke-width="1"/><path d="M99.3 81.4 V100.2" stroke="#00ee00" stroke-width="1"/><rect x="96.8" y="81.4" width="5" height="2.3" fill="#fff" stroke="#00ee00" stroke-width="0.8"/><path d="M107.3 81.4 V105" stroke="#00ee00" stroke-width="1"/><rect x="104.8" y="83.7" width="5" height="13" fill="#fff" stroke="#00ee00" stroke-width="0.8"/><path d="M115.3 88.4 V126.2" stroke="#00ee00" stroke-width="1"/><rect x="112.8" y="101.4" width="5" height="24.8" fill="#fff" stroke="#00ee00" stroke-width="0.8"/><path d="M123.3 107.8 V126.2" stroke="#00ee00" stroke-width="1"/><rect x="121.3" y="109.2" width="4" height="17" fill="#000" stroke="#00ee00" stroke-width="1"/><path d="M131.4 88.4 V113.2" stroke="#00ee00" stroke-width="1"/><rect x="129.4" y="93.2" width="4" height="12.2" fill="#000" stroke="#00ee00" stroke-width="1"/><path d="M139.1 90.8 V114.4" stroke="#00ee00" stroke-width="1"/><rect x="136.6" y="93.2" width="5" height="16" fill="#fff" stroke="#00ee00" stroke-width="0.8"/><path d="M147.4 105 V126.2" stroke="#00ee00" stroke-width="1"/><rect x="144.9" y="108.5" width="5" height="2.1" fill="#fff" stroke="#00ee00" stroke-width="0.8"/><path d="M155.2 92 V126.2" stroke="#00ee00" stroke-width="1"/><rect x="152.7" y="109.2" width="5" height="17" fill="#fff" stroke="#00ee00" stroke-width="0.8"/><path d="M163.5 96.7 V126.2" stroke="#00ee00" stroke-width="1"/><rect x="161.5" y="108.5" width="4" height="15.8" fill="#000" stroke="#00ee00" stroke-width="1"/><path d="M171.2 92 V114.4" stroke="#00ee00" stroke-width="1"/><rect x="169.2" y="94.3" width="4" height="15.8" fill="#000" stroke="#00ee00" stroke-width="1"/><path d="M179.3 93.2 V110.9" stroke="#00ee00" stroke-width="1"/><rect x="176.8" y="97.4" width="5" height="8.7" fill="#fff" stroke="#00ee00" stroke-width="0.8"/><path d="M187.3 90.8 V112" stroke="#00ee00" stroke-width="1"/><rect x="185.3" y="94.3" width="4" height="13" fill="#000" stroke="#00ee00" stroke-width="1"/><path d="M195.3 88.4 V126.2" stroke="#00ee00" stroke-width="1"/><rect x="192.8" y="89.6" width="5" height="36.6" fill="#fff" stroke="#00ee00" stroke-width="0.8"/><path d="M203.3 109.2 V126.2" stroke="#00ee00" stroke-width="1"/><rect x="201.3" y="115.6" width="4" height="10.6" fill="#000" stroke="#00ee00" stroke-width="1"/><path d="M211.4 103.8 V123.8" stroke="#00ee00" stroke-width="1"/><rect x="208.9" y="107.3" width="5" height="9" fill="#fff" stroke="#00ee00" stroke-width="0.8"/><path d="M219.4 113.9 V126.2" stroke="#00ee00" stroke-width="1"/><rect x="216.9" y="114.4" width="5" height="11.8" fill="#fff" stroke="#00ee00" stroke-width="0.8"/><path d="M39.6 126.2 L56.1 116.8 L70.2 107.3 L84.4 100.2 L98.6 94.3 L112.7 92 L126.9 90.3 L141 86.5 L155.2 84.2 L169.4 87.3 L183.5 86.1 L195.3 90.3 L207.1 95.5 L218.9 100.2 L227.2 105" fill="none" stroke="#2fae4f" stroke-width="1"/><path d="M3 97.9 L13.6 88.4 L27.8 80.2" fill="none" stroke="#2fae4f" stroke-width="1"/><path d="M115 17.5 H136" stroke="#2fae4f" stroke-width="1"/><path d="M95.5 14 V20" stroke="#00ee00" stroke-width="1"/><path d="M2.5 140 V2.5 H247.5 V140" fill="none" stroke="#fff" stroke-width="1"/></svg><div class="a" style="left:6px;top:9px;width:0;height:0;border-left:3.5px solid transparent;border-right:3.5px solid transparent;border-bottom:4px solid #fff;"></div><div class="ctx" style="left:18px;top:6px;">USOUSD,M1&nbsp; 113.455 113.471 113.405 113.405</div><div class="pl" style="top:26.5px;">113.715</div><div class="pl" style="top:59.5px;">113.635</div><div class="pl" style="top:92.5px;">113.555</div><div class="a red" style="left:6px;top:46px;width:108.5px;height:33px;"></div><div class="a red" style="left:116.5px;top:46px;width:108.5px;height:33px;"></div><div class="a redt" style="left:6px;top:22px;width:52px;height:24px;"></div><div class="a redt" style="left:174px;top:22px;width:51px;height:24px;"></div><div class="a" style="left:10px;top:46px;width:44px;height:1px;background:rgba(255,255,255,0.5);"></div><div class="a" style="left:177.5px;top:46px;width:44px;height:1px;background:rgba(255,255,255,0.5);"></div><div class="bs" style="left:18px;top:27.5px;font-size:12.3px;line-height:13px;letter-spacing:-1.1px;">SELL</div><div class="bs" style="left:186px;top:27.5px;font-size:12.3px;line-height:13px;letter-spacing:-0.7px;">BUY</div><div class="sp" style="left:59.7px;top:22px;width:111.5px;height:22px;"></div><div class="a" style="left:81px;top:23px;width:68px;height:20px;background:#fff;border-left:1px solid #b0b0b0;border-right:1px solid #b0b0b0;box-sizing:border-box;"></div><div class="a" style="left:68px;top:31px;width:0;height:0;border-left:3px solid transparent;border-right:3px solid transparent;border-top:3.5px solid #000;"></div><div class="a" style="left:157px;top:30.5px;width:0;height:0;border-left:3px solid transparent;border-right:3px solid transparent;border-bottom:3.5px solid #000;"></div><div class="t" style="right:148.5px;top:26.5px;font-size:12.3px;line-height:13px;color:#222;">0.20</div><div class="sm" style="right:243.8px;top:63.4px;">113</div><div class="big" style="left:52.7px;top:47.2px;">39</div><div class="sm" style="left:93.2px;top:47.6px;font-size:12.4px;">9</div><div class="sm" style="right:133.3px;top:63.4px;">113</div><div class="big" style="left:163.2px;top:47.2px;">45</div><div class="sm" style="left:203.7px;top:47.6px;font-size:12.4px;">3</div></div></div><div class="cw" style="left:626px;"><svg class="a" style="left:10px;top:11px" width="15" height="15" viewBox="0 0 15 15"><rect x="0.5" y="0.5" width="9.5" height="8.5" fill="#eaf3fd" stroke="#3a84e0" stroke-width="1" stroke-dasharray="1.5 0.7"/><path d="M2 3.5 L3.5 2 L5 4 L6.5 2.5 L8.5 3.5" stroke="#3a84e0" stroke-width="0.8" fill="none"/><rect x="4" y="5" width="10.5" height="9.5" fill="#fff" stroke="#3a84e0" stroke-width="1"/><path d="M5.5 8 L7 11.5 L8.5 9 L10 12 L11.5 9 L13 11" stroke="#3a84e0" stroke-width="0.9" fill="none"/></svg><div class="ttl">XAUUSD,M1</div><div class="cbtn" style="left:202px;"><div class="a" style="left:9.5px;top:6.8px;width:11px;height:5px;border:1px solid #555;border-radius:2px;background:#f4f4f4;box-sizing:border-box;"></div></div><div class="cbtn" style="left:236px;"><div class="a" style="left:10px;top:2.8px;width:11px;height:9px;border:1px solid #555;border-radius:2px;background:#f4f4f4;box-sizing:border-box;"><div class="a" style="left:2.5px;top:2px;width:4px;height:3px;border:1px solid #555;box-sizing:border-box;"></div></div></div><div class="cbtn" style="left:270px;"><svg class="a" style="left:9px;top:2.4px" width="12" height="10" viewBox="0 0 12 10"><path d="M2 1.5 L10 8.5 M10 1.5 L2 8.5" stroke="#555" stroke-width="3.4" stroke-linecap="square"/><path d="M2 1.5 L10 8.5 M10 1.5 L2 8.5" stroke="#f4f4f4" stroke-width="1.7" stroke-linecap="square"/></svg></div><div class="blk"><svg class="a" style="left:0;top:0" width="294" height="140" viewBox="0 0 294 140"><path d="M35.5 2 V140" stroke="#8a94a0" stroke-width="1" stroke-dasharray="3 3"/><path d="M67.5 2 V140" stroke="#8a94a0" stroke-width="1" stroke-dasharray="3 3"/><path d="M99.5 2 V140" stroke="#8a94a0" stroke-width="1" stroke-dasharray="3 3"/><path d="M131.5 2 V140" stroke="#8a94a0" stroke-width="1" stroke-dasharray="3 3"/><path d="M163.5 2 V140" stroke="#8a94a0" stroke-width="1" stroke-dasharray="3 3"/><path d="M195.5 2 V140" stroke="#8a94a0" stroke-width="1" stroke-dasharray="3 3"/><path d="M227.5 2 V140" stroke="#8a94a0" stroke-width="1" stroke-dasharray="3 3"/><path d="M3 17.5 H249.5" stroke="#8a94a0" stroke-width="1" stroke-dasharray="3 3"/><path d="M3 53.5 H249.5" stroke="#8a94a0" stroke-width="1" stroke-dasharray="3 3"/><path d="M3 89.5 H249.5" stroke="#8a94a0" stroke-width="1" stroke-dasharray="3 3"/><path d="M3 124.5 H249.5" stroke="#8a94a0" stroke-width="1" stroke-dasharray="3 3"/><path d="M2 97.5 H247.5" stroke="#a8a8a8" stroke-width="1"/><path d="M4 51.9 V126.2" stroke="#00ee00" stroke-width="1"/><rect x="2" y="83.7" width="4" height="10.6" fill="#000" stroke="#00ee00" stroke-width="1"/><path d="M18.9 81.4 V95.5" stroke="#00ee00" stroke-width="1"/><path d="M27.6 81.4 V119.1" stroke="#00ee00" stroke-width="1"/><rect x="25.1" y="81.4" width="5" height="12.9" fill="#fff" stroke="#00ee00" stroke-width="0.8"/><path d="M35.4 81.4 V100.2" stroke="#00ee00" stroke-width="1"/><rect x="33.4" y="81.4" width="4" height="12.9" fill="#000" stroke="#00ee00" stroke-width="1"/><path d="M43.6 81.4 V97.9" stroke="#00ee00" stroke-width="1"/><rect x="41.1" y="81.4" width="5" height="7" fill="#fff" stroke="#00ee00" stroke-width="0.8"/><path d="M51.4 81.4 V95.5" stroke="#00ee00" stroke-width="1"/><rect x="49.4" y="81.4" width="4" height="7" fill="#000" stroke="#00ee00" stroke-width="1"/><path d="M91.3 81.4 V101.4" stroke="#00ee00" stroke-width="1"/><path d="M107.8 81.4 V84.9" stroke="#00ee00" stroke-width="1"/><path d="M179.3 81.4 V126.2" stroke="#00ee00" stroke-width="1"/><rect x="176.8" y="81.4" width="5" height="44.8" fill="#fff" stroke="#00ee00" stroke-width="0.8"/><path d="M187.6 115.6 V126.2" stroke="#00ee00" stroke-width="1"/><path d="M219.4 113.2 V126.2" stroke="#00ee00" stroke-width="1"/><rect x="217.4" y="115.6" width="4" height="10.6" fill="#000" stroke="#00ee00" stroke-width="1"/><path d="M227.7 95.5 V112" stroke="#00ee00" stroke-width="1"/><rect x="225.7" y="97.4" width="4" height="9.9" fill="#000" stroke="#00ee00" stroke-width="1"/><path d="M3.5 123.8 L17.7 117.9 L34.2 116.8 L50.7 114.4 L67.2 117.9 L86.1 114.4 L109.7 112 L128.6 107.3 L152.2 100.2 L171.1 97.4 L175.8 102.6 L182.9 114.4 L189.9 126.2" fill="none" stroke="#2fae4f" stroke-width="1"/><path d="M162 18 L174 13 L189 3" fill="none" stroke="#2fae4f" stroke-width="1"/><path d="M97 82 H103 M105 82 H111" stroke="#fff" stroke-width="1.4"/><path d="M2.5 140 V2.5 H247.5 V140" fill="none" stroke="#fff" stroke-width="1"/></svg><div class="a" style="left:6px;top:9px;width:0;height:0;border-left:3.5px solid transparent;border-right:3.5px solid transparent;border-bottom:4px solid #fff;"></div><div class="ctx" style="left:18px;top:6px;">XAUUSD,M1&nbsp; 1846.65 1846.77 1846.61 1846.76</div><div class="pl" style="top:12.5px;">1847.65</div><div class="pl" style="top:48.5px;">1847.25</div><div class="pl" style="top:84.5px;">1846.85</div><div class="a" style="left:250px;top:91.5px;width:41px;height:12px;background:#fff;"></div><div class="pl" style="top:92.5px;color:#000;">1846.76</div><div class="pl" style="top:119px;">1846.45</div><div class="a blu" style="left:6px;top:46px;width:108.5px;height:33px;"></div><div class="a blu" style="left:116.5px;top:46px;width:108.5px;height:33px;"></div><div class="a blut" style="left:6px;top:22px;width:52px;height:24px;"></div><div class="a blut" style="left:174px;top:22px;width:51px;height:24px;"></div><div class="a" style="left:10px;top:46px;width:44px;height:1px;background:rgba(255,255,255,0.5);"></div><div class="a" style="left:177.5px;top:46px;width:44px;height:1px;background:rgba(255,255,255,0.5);"></div><div class="bs" style="left:18px;top:27.5px;font-size:12.3px;line-height:13px;letter-spacing:-1.1px;">SELL</div><div class="bs" style="left:186px;top:27.5px;font-size:12.3px;line-height:13px;letter-spacing:-0.7px;">BUY</div><div class="sp" style="left:59.7px;top:22px;width:111.5px;height:22px;"></div><div class="a" style="left:81px;top:23px;width:68px;height:20px;background:#fff;border-left:1px solid #b0b0b0;border-right:1px solid #b0b0b0;box-sizing:border-box;"></div><div class="a" style="left:68px;top:31px;width:0;height:0;border-left:3px solid transparent;border-right:3px solid transparent;border-top:3.5px solid #000;"></div><div class="a" style="left:157px;top:30.5px;width:0;height:0;border-left:3px solid transparent;border-right:3px solid transparent;border-bottom:3.5px solid #000;"></div><div class="t" style="right:148.5px;top:26.5px;font-size:12.3px;line-height:13px;color:#222;">0.30</div><div class="sm" style="right:236.5px;top:63.4px;">1846</div><div class="big" style="left:59.8px;top:47.2px;">66</div><div class="sm" style="right:126px;top:63.4px;">1847</div><div class="big" style="left:170.3px;top:47.2px;">05</div></div></div><div class="cw" style="left:939px;"><svg class="a" style="left:10px;top:11px" width="15" height="15" viewBox="0 0 15 15"><rect x="0.5" y="0.5" width="9.5" height="8.5" fill="#eaf3fd" stroke="#3a84e0" stroke-width="1" stroke-dasharray="1.5 0.7"/><path d="M2 3.5 L3.5 2 L5 4 L6.5 2.5 L8.5 3.5" stroke="#3a84e0" stroke-width="0.8" fill="none"/><rect x="4" y="5" width="10.5" height="9.5" fill="#fff" stroke="#3a84e0" stroke-width="1"/><path d="M5.5 8 L7 11.5 L8.5 9 L10 12 L11.5 9 L13 11" stroke="#3a84e0" stroke-width="0.9" fill="none"/></svg><div class="ttl">USDCHF,M1</div><div class="cbtn" style="left:202px;"><div class="a" style="left:9.5px;top:6.8px;width:11px;height:5px;border:1px solid #555;border-radius:2px;background:#f4f4f4;box-sizing:border-box;"></div></div><div class="cbtn" style="left:236px;"><div class="a" style="left:10px;top:2.8px;width:11px;height:9px;border:1px solid #555;border-radius:2px;background:#f4f4f4;box-sizing:border-box;"><div class="a" style="left:2.5px;top:2px;width:4px;height:3px;border:1px solid #555;box-sizing:border-box;"></div></div></div><div class="cbtn" style="left:270px;"><svg class="a" style="left:9px;top:2.4px" width="12" height="10" viewBox="0 0 12 10"><path d="M2 1.5 L10 8.5 M10 1.5 L2 8.5" stroke="#555" stroke-width="3.4" stroke-linecap="square"/><path d="M2 1.5 L10 8.5 M10 1.5 L2 8.5" stroke="#f4f4f4" stroke-width="1.7" stroke-linecap="square"/></svg></div><div class="blk"><svg class="a" style="left:0;top:0" width="294" height="140" viewBox="0 0 294 140"><path d="M35.5 2 V140" stroke="#8a94a0" stroke-width="1" stroke-dasharray="3 3"/><path d="M67.5 2 V140" stroke="#8a94a0" stroke-width="1" stroke-dasharray="3 3"/><path d="M99.5 2 V140" stroke="#8a94a0" stroke-width="1" stroke-dasharray="3 3"/><path d="M131.5 2 V140" stroke="#8a94a0" stroke-width="1" stroke-dasharray="3 3"/><path d="M163.5 2 V140" stroke="#8a94a0" stroke-width="1" stroke-dasharray="3 3"/><path d="M195.5 2 V140" stroke="#8a94a0" stroke-width="1" stroke-dasharray="3 3"/><path d="M227.5 2 V140" stroke="#8a94a0" stroke-width="1" stroke-dasharray="3 3"/><path d="M3 31.5 H249.5" stroke="#8a94a0" stroke-width="1" stroke-dasharray="3 3"/><path d="M3 90.5 H249.5" stroke="#8a94a0" stroke-width="1" stroke-dasharray="3 3"/><path d="M27.4 105.9 V125.8" stroke="#00ee00" stroke-width="1"/><rect x="25.4" y="106.5" width="4" height="19.3" fill="#000" stroke="#00ee00" stroke-width="1"/><path d="M35.6 102.1 V110.6" stroke="#00ee00" stroke-width="1"/><rect x="33.6" y="103" width="4" height="2.3" fill="#000" stroke="#00ee00" stroke-width="1"/><path d="M43.5 83.2 V108.7" stroke="#00ee00" stroke-width="1"/><rect x="41.5" y="90.7" width="4" height="12.7" fill="#000" stroke="#00ee00" stroke-width="1"/><path d="M51.5 81.3 V91.7" stroke="#00ee00" stroke-width="1"/><rect x="49.5" y="81.6" width="4" height="8.6" fill="#000" stroke="#00ee00" stroke-width="1"/><path d="M67.4 81.3 V103" stroke="#00ee00" stroke-width="1"/><rect x="64.9" y="81.3" width="5" height="11.9" fill="#fff" stroke="#00ee00" stroke-width="0.8"/><path d="M75.7 90.7 V98.3" stroke="#00ee00" stroke-width="1"/><rect x="73.7" y="91.3" width="4" height="1.9" fill="#000" stroke="#00ee00" stroke-width="1"/><path d="M83.7 90.7 V125.8" stroke="#00ee00" stroke-width="1"/><rect x="81.2" y="90.7" width="5" height="27.1" fill="#fff" stroke="#00ee00" stroke-width="0.8"/><path d="M91.7 106.5 V123.9" stroke="#00ee00" stroke-width="1"/><rect x="89.7" y="117.8" width="4" height="0.8" fill="#000" stroke="#00ee00" stroke-width="1"/><path d="M99.6 104 V123.9" stroke="#00ee00" stroke-width="1"/><rect x="97.6" y="107.8" width="4" height="2.8" fill="#000" stroke="#00ee00" stroke-width="1"/><path d="M107.6 95.5 V108.7" stroke="#00ee00" stroke-width="1"/><rect x="105.6" y="104.6" width="4" height="3.7" fill="#000" stroke="#00ee00" stroke-width="1"/><path d="M115.5 91.7 V106.8" stroke="#00ee00" stroke-width="1"/><rect x="113.5" y="95.5" width="4" height="9.1" fill="#000" stroke="#00ee00" stroke-width="1"/><path d="M2.8 112.1 L18.9 112.9 L28.4 106.8 L43.5 93.6 L59.6 80.7" fill="none" stroke="#2fae4f" stroke-width="1"/><path d="M75.7 125.8 L96.6 121 L121.2 114 L134.5 110.6" fill="none" stroke="#2fae4f" stroke-width="1"/><path d="M2.5 140 V2.5 H247.5 V140" fill="none" stroke="#fff" stroke-width="1"/></svg><div class="a" style="left:6px;top:9px;width:0;height:0;border-left:3.5px solid transparent;border-right:3.5px solid transparent;border-bottom:4px solid #fff;"></div><div class="ctx" style="left:18px;top:6px;">USDCHF,M1&nbsp; 0.96026 0.96036 0.96020 0.96024</div><div class="pl" style="top:26px;">0.96040</div><div class="pl" style="top:85.5px;">0.96025</div><div class="a red" style="left:6px;top:46px;width:108.5px;height:33px;"></div><div class="a red" style="left:116.5px;top:46px;width:108.5px;height:33px;"></div><div class="a redt" style="left:6px;top:22px;width:52px;height:24px;"></div><div class="a redt" style="left:174px;top:22px;width:51px;height:24px;"></div><div class="a" style="left:10px;top:46px;width:44px;height:1px;background:rgba(255,255,255,0.5);"></div><div class="a" style="left:177.5px;top:46px;width:44px;height:1px;background:rgba(255,255,255,0.5);"></div><div class="bs" style="left:18px;top:27.5px;font-size:12.3px;line-height:13px;letter-spacing:-1.1px;">SELL</div><div class="bs" style="left:186px;top:27.5px;font-size:12.3px;line-height:13px;letter-spacing:-0.7px;">BUY</div><div class="sp" style="left:59.7px;top:22px;width:111.5px;height:22px;"></div><div class="a" style="left:81px;top:23px;width:68px;height:20px;background:#fff;border-left:1px solid #b0b0b0;border-right:1px solid #b0b0b0;box-sizing:border-box;"></div><div class="a" style="left:68px;top:31px;width:0;height:0;border-left:3px solid transparent;border-right:3px solid transparent;border-top:3.5px solid #000;"></div><div class="a" style="left:157px;top:30.5px;width:0;height:0;border-left:3px solid transparent;border-right:3px solid transparent;border-bottom:3.5px solid #000;"></div><div class="t" style="right:148.5px;top:26.5px;font-size:12.3px;line-height:13px;color:#222;">0.50</div><div class="sm" style="right:243.8px;top:63.4px;">0.96</div><div class="big" style="left:52.7px;top:47.2px;">02</div><div class="sm" style="left:93.2px;top:47.6px;font-size:12.4px;">4</div><div class="sm" style="right:133.3px;top:63.4px;">0.96</div><div class="big" style="left:163.2px;top:47.2px;">04</div><div class="sm" style="left:203.7px;top:47.6px;font-size:12.4px;">2</div></div></div></div>
<div class="a " style="left:281px;top:74px;width:1073px;height:2px;background:linear-gradient(180deg,#9a9a9a,#5a5a5a);"></div>
<div class="a " style="left:11px;top:74px;width:270px;height:1px;background:#a0a0a0;"></div>
<div class="a " style="left:11px;top:75px;width:270px;height:1px;background:#fff;"></div>
<div class="a " style="left:1353px;top:75px;width:3px;height:182px;background:#fff;"></div>
<div class="a " style="left:283px;top:235px;width:1071px;height:2px;background:#fff;"></div>
<div id="ctabs" class="a"></div>
<div class="a" style="left:287px;top:237px;width:95px;height:18.6px;background:#fff;border:1px solid #000;border-top:none;box-sizing:border-box;box-shadow:0.6px 0.4px 0 #000;"></div>
<div class="ctab" style="left:298.5px;color:#000;">AUDUSD,M1</div>
<div class="ctab" style="left:395px;">GBPNZD,M1</div>
<div class="ctab" style="left:490px;">USOUSD,M1</div>
<div class="ctab" style="left:587px;">EURNZD,M1</div>
<div class="ctab" style="left:683px;">XAUUSD,M1</div>
<div class="ctab" style="left:779px;">EURNZD,M1</div>
<div class="ctab" style="left:874px;">USDCHF,M1</div>
<div class="ctab" style="left:965px;">GBPCAD,M1</div>
<div class="ctsep" style="left:479px"></div>
<div class="ctsep" style="left:575px"></div>
<div class="ctsep" style="left:671px"></div>
<div class="ctsep" style="left:767px"></div>
<div class="ctsep" style="left:862px"></div>
<div class="ctsep" style="left:953px"></div>
<div class="ctsep" style="left:1046px"></div>
<svg class="a" style="left:1318px;top:240px" width="32" height="12" viewBox="0 0 32 12"><path d="M8 2 L4 6 L8 10 Z M24 2 L28 6 L24 10 Z" fill="#8a8a8a"/></svg>
<div id="term" class="a"></div>
<div class="a " style="left:11px;top:256px;width:271px;height:1px;background:#a8a8a8;"></div>
<div class="a " style="left:283px;top:256px;width:1071px;height:1px;background:#fafafa;"></div>
<div class="a " style="left:11px;top:257px;width:1343px;height:1px;background:#fff;"></div>
<div id="tside" class="a"></div>
<svg class="a" style="left:14px;top:263px" width="8" height="7" viewBox="0 0 8 7"><path d="M1.2 1 L6.8 6 M6.8 1 L1.2 6" stroke="#000" stroke-width="1.9"/></svg>
<div id="tbl" class="a"><div class="row hd" style="top:0;height:25px;border-bottom:1px solid #c6c6c6;"><div class="c" style="left:0px;width:115px;text-align:left;padding-left:6px;">订单<span style="font-size:9px;color:#777;margin-left:11px;position:relative;top:0px;">/</span></div><div class="c" style="left:115px;width:196px;">时间</div><div class="c" style="left:311px;width:89px;">类型</div><div class="c" style="left:400px;width:71px;">手数</div><div class="c" style="left:471px;width:89px;">交易品种</div><div class="c" style="left:560px;width:89px;">价格</div><div class="c" style="left:649px;width:89px;">止损</div><div class="c" style="left:738px;width:89px;">止盈</div><div class="c" style="left:827px;width:196px;">时间</div><div class="c" style="left:1023px;width:89px;">价格</div><div class="c" style="left:1112px;width:89px;">库存费</div><div class="c nb" style="left:1201px;width:107px;">获利</div></div><div class="row" style="top:25px;"><div class="c" style="left:0px;width:115px;text-align:left;padding-left:22.4px;"><svg class="ic" viewBox="0 0 15 16"><rect x="0.6" y="0.6" width="10.6" height="12.6" rx="1.2" fill="#f6f6f6" stroke="#777" stroke-width="1"/><path d="M5.9 3.6 L9.8 7.6 H7.7 V10.6 H4.1 V7.6 H2 Z" fill="#2ab82a" stroke="#0a7a0a" stroke-width="0.7"/></svg>16414845</div><div class="c" style="left:115px;width:196px;">2022.04.22 08:32:22</div><div class="c" style="left:311px;width:89px;letter-spacing:0.45px;padding-right:1.6px;">balance</div><div class="c" style="left:400px;width:801px;">DB:20220422007</div><div class="c nb" style="left:1201px;width:107px;">2 300.00</div></div><div class="row g" style="top:46px;"><div class="c" style="left:0px;width:115px;text-align:left;padding-left:22.4px;"><svg class="ic" viewBox="0 0 15 16"><path d="M0.6 1.7 Q0.6 0.7 1.6 0.7 H8.2 L11.2 3.7 V12.1 Q11.2 13.1 10.2 13.1 H1.6 Q0.6 13.1 0.6 12.1 Z" fill="#fafafa" stroke="#666" stroke-width="1"/><path d="M8.2 0.9 V3.7 H11" fill="none" stroke="#888" stroke-width="0.8"/><circle cx="10.5" cy="11.4" r="3.2" fill="#2a9ae8" stroke="#1a62b0" stroke-width="0.8"/></svg>16434991</div><div class="c" style="left:115px;width:196px;">2022.04.24 21:14:13</div><div class="c" style="left:311px;width:89px;letter-spacing:0.45px;padding-right:1.6px;">buy limit</div><div class="c" style="left:400px;width:71px;">1.00</div><div class="c" style="left:471px;width:89px;letter-spacing:0.45px;padding-right:1.6px;">gbpaud</div><div class="c" style="left:560px;width:89px;">1.77050</div><div class="c" style="left:649px;width:89px;">0.00000</div><div class="c" style="left:738px;width:89px;">1.77200</div><div class="c" style="left:827px;width:196px;">2022.04.24 21:34:53</div><div class="c" style="left:1023px;width:89px;">1.77088</div><div class="c" style="left:1112px;width:89px;"></div><div class="c nb" style="left:1201px;width:107px;"></div></div><div class="row" style="top:67px;"><div class="c" style="left:0px;width:115px;text-align:left;padding-left:22.4px;"><svg class="ic" viewBox="0 0 15 16"><path d="M0.6 1.7 Q0.6 0.7 1.6 0.7 H8.2 L11.2 3.7 V12.1 Q11.2 13.1 10.2 13.1 H1.6 Q0.6 13.1 0.6 12.1 Z" fill="#fafafa" stroke="#666" stroke-width="1"/><path d="M8.2 0.9 V3.7 H11" fill="none" stroke="#888" stroke-width="0.8"/><circle cx="10.5" cy="11.4" r="3.2" fill="#ec4a1a" stroke="#a82c0c" stroke-width="0.8"/></svg>16435114</div><div class="c" style="left:115px;width:196px;">2022.04.24 21:22:12</div><div class="c" style="left:311px;width:89px;letter-spacing:0.45px;padding-right:1.6px;">sell</div><div class="c" style="left:400px;width:71px;">1.00</div><div class="c" style="left:471px;width:89px;letter-spacing:0.45px;padding-right:1.6px;">eurnzd</div><div class="c" style="left:560px;width:89px;">1.62923</div><div class="c" style="left:649px;width:89px;">0.00000</div><div class="c" style="left:738px;width:89px;"><div class="grn"></div><span style="position:relative;">1.62810</span></div><div class="c" style="left:827px;width:196px;">2022.04.24 21:24:33</div><div class="c" style="left:1023px;width:89px;">1.62785</div><div class="c" style="left:1112px;width:89px;">0.00</div><div class="c nb" style="left:1201px;width:107px;">91.71</div></div><div class="row g" style="top:88px;"><div class="c" style="left:0px;width:115px;text-align:left;padding-left:22.4px;"><svg class="ic" viewBox="0 0 15 16"><path d="M0.6 1.7 Q0.6 0.7 1.6 0.7 H8.2 L11.2 3.7 V12.1 Q11.2 13.1 10.2 13.1 H1.6 Q0.6 13.1 0.6 12.1 Z" fill="#fafafa" stroke="#666" stroke-width="1"/><path d="M8.2 0.9 V3.7 H11" fill="none" stroke="#888" stroke-width="0.8"/><circle cx="10.5" cy="11.4" r="3.2" fill="#ec4a1a" stroke="#a82c0c" stroke-width="0.8"/></svg>16435125</div><div class="c" style="left:115px;width:196px;">2022.04.24 21:21:08</div><div class="c" style="left:311px;width:89px;letter-spacing:0.45px;padding-right:1.6px;">sell limit</div><div class="c" style="left:400px;width:71px;">1.00</div><div class="c" style="left:471px;width:89px;letter-spacing:0.45px;padding-right:1.6px;">eurnzd</div><div class="c" style="left:560px;width:89px;">1.62950</div><div class="c" style="left:649px;width:89px;">0.00000</div><div class="c" style="left:738px;width:89px;">1.62820</div><div class="c" style="left:827px;width:196px;">2022.04.24 21:59:42</div><div class="c" style="left:1023px;width:89px;">1.62652</div><div class="c" style="left:1112px;width:89px;"></div><div class="c nb" style="left:1201px;width:107px;"></div></div><div class="row" style="top:109px;"><div class="c" style="left:0px;width:115px;text-align:left;padding-left:22.4px;"><svg class="ic" viewBox="0 0 15 16"><path d="M0.6 1.7 Q0.6 0.7 1.6 0.7 H8.2 L11.2 3.7 V12.1 Q11.2 13.1 10.2 13.1 H1.6 Q0.6 13.1 0.6 12.1 Z" fill="#fafafa" stroke="#666" stroke-width="1"/><path d="M8.2 0.9 V3.7 H11" fill="none" stroke="#888" stroke-width="0.8"/><circle cx="10.5" cy="11.4" r="3.2" fill="#2a9ae8" stroke="#1a62b0" stroke-width="0.8"/></svg>16435209</div><div class="c" style="left:115px;width:196px;">2022.04.24 21:24:47</div><div class="c" style="left:311px;width:89px;letter-spacing:0.45px;padding-right:1.6px;">buy</div><div class="c" style="left:400px;width:71px;">1.00</div><div class="c" style="left:471px;width:89px;letter-spacing:0.45px;padding-right:1.6px;">gbpnzd</div><div class="c" style="left:560px;width:89px;">1.93277</div><div class="c" style="left:649px;width:89px;">0.00000</div><div class="c" style="left:738px;width:89px;">1.93550</div><div class="c" style="left:827px;width:196px;">2022.04.24 21:29:22</div><div class="c" style="left:1023px;width:89px;">1.93402</div><div class="c" style="left:1112px;width:89px;">0.00</div><div class="c nb" style="left:1201px;width:107px;">82.92</div></div><div class="row g" style="top:130px;"><div class="c" style="left:0px;width:115px;text-align:left;padding-left:22.4px;"><svg class="ic" viewBox="0 0 15 16"><path d="M0.6 1.7 Q0.6 0.7 1.6 0.7 H8.2 L11.2 3.7 V12.1 Q11.2 13.1 10.2 13.1 H1.6 Q0.6 13.1 0.6 12.1 Z" fill="#fafafa" stroke="#666" stroke-width="1"/><path d="M8.2 0.9 V3.7 H11" fill="none" stroke="#888" stroke-width="0.8"/><circle cx="10.5" cy="11.4" r="3.2" fill="#2a9ae8" stroke="#1a62b0" stroke-width="0.8"/></svg>16435249</div><div class="c" style="left:115px;width:196px;">2022.04.24 21:26:00</div><div class="c" style="left:311px;width:89px;letter-spacing:0.45px;padding-right:1.6px;">buy</div><div class="c" style="left:400px;width:71px;">1.00</div><div class="c" style="left:471px;width:89px;letter-spacing:0.45px;padding-right:1.6px;">gbpaud</div><div class="c" style="left:560px;width:89px;">1.77081</div><div class="c" style="left:649px;width:89px;">0.00000</div><div class="c" style="left:738px;width:89px;"><div class="grn"></div><span style="position:relative;">1.77100</span></div><div class="c" style="left:827px;width:196px;">2022.04.24 22:00:01</div><div class="c" style="left:1023px;width:89px;">1.77158</div><div class="c" style="left:1112px;width:89px;">0.00</div><div class="c nb" style="left:1201px;width:107px;">55.78</div></div><div class="row" style="top:151px;"><div class="c" style="left:0px;width:115px;text-align:left;padding-left:22.4px;"><svg class="ic" viewBox="0 0 15 16"><path d="M0.6 1.7 Q0.6 0.7 1.6 0.7 H8.2 L11.2 3.7 V12.1 Q11.2 13.1 10.2 13.1 H1.6 Q0.6 13.1 0.6 12.1 Z" fill="#fafafa" stroke="#666" stroke-width="1"/><path d="M8.2 0.9 V3.7 H11" fill="none" stroke="#888" stroke-width="0.8"/><circle cx="10.5" cy="11.4" r="3.2" fill="#2a9ae8" stroke="#1a62b0" stroke-width="0.8"/></svg>16435285</div><div class="c" style="left:115px;width:196px;">2022.04.24 21:28:38</div><div class="c" style="left:311px;width:89px;letter-spacing:0.45px;padding-right:1.6px;">buy limit</div><div class="c" style="left:400px;width:71px;">1.00</div><div class="c" style="left:471px;width:89px;letter-spacing:0.45px;padding-right:1.6px;">gbpnzd</div><div class="c" style="left:560px;width:89px;">1.93261</div><div class="c" style="left:649px;width:89px;">0.00000</div><div class="c" style="left:738px;width:89px;">0.00000</div><div class="c" style="left:827px;width:196px;">2022.04.24 22:00:00</div><div class="c" style="left:1023px;width:89px;">1.93346</div><div class="c" style="left:1112px;width:89px;"></div><div class="c nb" style="left:1201px;width:107px;"></div></div><div class="row g" style="top:172px;"><div class="c" style="left:0px;width:115px;text-align:left;padding-left:22.4px;"><svg class="ic" viewBox="0 0 15 16"><path d="M0.6 1.7 Q0.6 0.7 1.6 0.7 H8.2 L11.2 3.7 V12.1 Q11.2 13.1 10.2 13.1 H1.6 Q0.6 13.1 0.6 12.1 Z" fill="#fafafa" stroke="#666" stroke-width="1"/><path d="M8.2 0.9 V3.7 H11" fill="none" stroke="#888" stroke-width="0.8"/><circle cx="10.5" cy="11.4" r="3.2" fill="#2a9ae8" stroke="#1a62b0" stroke-width="0.8"/></svg>16435294</div><div class="c" style="left:115px;width:196px;">2022.04.24 21:29:05</div><div class="c" style="left:311px;width:89px;letter-spacing:0.45px;padding-right:1.6px;">buy limit</div><div class="c" style="left:400px;width:71px;">1.00</div><div class="c" style="left:471px;width:89px;letter-spacing:0.45px;padding-right:1.6px;">gbpnzd</div><div class="c" style="left:560px;width:89px;">1.93270</div><div class="c" style="left:649px;width:89px;">0.00000</div><div class="c" style="left:738px;width:89px;">1.93500</div><div class="c" style="left:827px;width:196px;">2022.04.24 21:59:44</div><div class="c" style="left:1023px;width:89px;">1.93541</div><div class="c" style="left:1112px;width:89px;"></div><div class="c nb" style="left:1201px;width:107px;"></div></div><div class="row" style="top:193px;"><div class="c" style="left:0px;width:115px;text-align:left;padding-left:22.4px;"><svg class="ic" viewBox="0 0 15 16"><path d="M0.6 1.7 Q0.6 0.7 1.6 0.7 H8.2 L11.2 3.7 V12.1 Q11.2 13.1 10.2 13.1 H1.6 Q0.6 13.1 0.6 12.1 Z" fill="#fafafa" stroke="#666" stroke-width="1"/><path d="M8.2 0.9 V3.7 H11" fill="none" stroke="#888" stroke-width="0.8"/><circle cx="10.5" cy="11.4" r="3.2" fill="#2a9ae8" stroke="#1a62b0" stroke-width="0.8"/></svg>16435298</div><div class="c" style="left:115px;width:196px;">2022.04.24 21:29:41</div><div class="c" style="left:311px;width:89px;letter-spacing:0.45px;padding-right:1.6px;">buy</div><div class="c" style="left:400px;width:71px;">1.00</div><div class="c" style="left:471px;width:89px;letter-spacing:0.45px;padding-right:1.6px;">gbpnzd</div><div class="c" style="left:560px;width:89px;">1.93379</div><div class="c" style="left:649px;width:89px;">0.00000</div><div class="c" style="left:738px;width:89px;">1.93500</div><div class="c" style="left:827px;width:196px;">2022.04.24 21:34:19</div><div class="c" style="left:1023px;width:89px;">1.93493</div><div class="c" style="left:1112px;width:89px;">0.00</div><div class="c nb" style="left:1201px;width:107px;">75.57</div></div><div class="row g" style="top:214px;"><div class="c" style="left:0px;width:115px;text-align:left;padding-left:22.4px;"><svg class="ic" viewBox="0 0 15 16"><path d="M0.6 1.7 Q0.6 0.7 1.6 0.7 H8.2 L11.2 3.7 V12.1 Q11.2 13.1 10.2 13.1 H1.6 Q0.6 13.1 0.6 12.1 Z" fill="#fafafa" stroke="#666" stroke-width="1"/><path d="M8.2 0.9 V3.7 H11" fill="none" stroke="#888" stroke-width="0.8"/><circle cx="10.5" cy="11.4" r="3.2" fill="#2a9ae8" stroke="#1a62b0" stroke-width="0.8"/></svg>16435305</div><div class="c" style="left:115px;width:196px;">2022.04.24 21:30:39</div><div class="c" style="left:311px;width:89px;letter-spacing:0.45px;padding-right:1.6px;">buy limit</div><div class="c" style="left:400px;width:71px;">1.00</div><div class="c" style="left:471px;width:89px;letter-spacing:0.45px;padding-right:1.6px;">gbpnzd</div><div class="c" style="left:560px;width:89px;">1.93250</div><div class="c" style="left:649px;width:89px;">0.00000</div><div class="c" style="left:738px;width:89px;">1.93500</div><div class="c" style="left:827px;width:196px;">2022.04.24 22:00:25</div><div class="c" style="left:1023px;width:89px;">1.93378</div><div class="c" style="left:1112px;width:89px;"></div><div class="c nb" style="left:1201px;width:107px;"></div></div><div class="row" style="top:235px;"><div class="c" style="left:0px;width:115px;text-align:left;padding-left:22.4px;"><svg class="ic" viewBox="0 0 15 16"><path d="M0.6 1.7 Q0.6 0.7 1.6 0.7 H8.2 L11.2 3.7 V12.1 Q11.2 13.1 10.2 13.1 H1.6 Q0.6 13.1 0.6 12.1 Z" fill="#fafafa" stroke="#666" stroke-width="1"/><path d="M8.2 0.9 V3.7 H11" fill="none" stroke="#888" stroke-width="0.8"/><circle cx="10.5" cy="11.4" r="3.2" fill="#2a9ae8" stroke="#1a62b0" stroke-width="0.8"/></svg>16435330</div><div class="c" style="left:115px;width:196px;">2022.04.24 21:33:07</div><div class="c" style="left:311px;width:89px;letter-spacing:0.45px;padding-right:1.6px;">buy</div><div class="c" style="left:400px;width:71px;">1.00</div><div class="c" style="left:471px;width:89px;letter-spacing:0.45px;padding-right:1.6px;">gbpaud</div><div class="c" style="left:560px;width:89px;">1.77054</div><div class="c" style="left:649px;width:89px;">0.00000</div><div class="c" style="left:738px;width:89px;"><div class="grn"></div><span style="position:relative;">1.77080</span></div><div class="c" style="left:827px;width:196px;">2022.04.24 21:39:52</div><div class="c" style="left:1023px;width:89px;">1.77098</div><div class="c" style="left:1112px;width:89px;">0.00</div><div class="c nb" style="left:1201px;width:107px;">31.89</div></div><div class="row g" style="top:256px;"><div class="c" style="left:0px;width:115px;text-align:left;padding-left:22.4px;"><svg class="ic" viewBox="0 0 15 16"><path d="M0.6 1.7 Q0.6 0.7 1.6 0.7 H8.2 L11.2 3.7 V12.1 Q11.2 13.1 10.2 13.1 H1.6 Q0.6 13.1 0.6 12.1 Z" fill="#fafafa" stroke="#666" stroke-width="1"/><path d="M8.2 0.9 V3.7 H11" fill="none" stroke="#888" stroke-width="0.8"/><circle cx="10.5" cy="11.4" r="3.2" fill="#2a9ae8" stroke="#1a62b0" stroke-width="0.8"/></svg>16435581</div><div class="c" style="left:115px;width:196px;">2022.04.24 21:51:01</div><div class="c" style="left:311px;width:89px;letter-spacing:0.45px;padding-right:1.6px;">buy</div><div class="c" style="left:400px;width:71px;">1.00</div><div class="c" style="left:471px;width:89px;letter-spacing:0.45px;padding-right:1.6px;">gbpaud</div><div class="c" style="left:560px;width:89px;">1.76994</div><div class="c" style="left:649px;width:89px;">0.00000</div><div class="c" style="left:738px;width:89px;"><div class="grn"></div><span style="position:relative;">1.77100</span></div><div class="c" style="left:827px;width:196px;">2022.04.24 22:00:01</div><div class="c" style="left:1023px;width:89px;">1.77158</div><div class="c" style="left:1112px;width:89px;">0.00</div><div class="c nb" style="left:1201px;width:107px;">118.81</div></div><div class="row" style="top:277px;"><div class="c" style="left:0px;width:115px;text-align:left;padding-left:22.4px;"><svg class="ic" viewBox="0 0 15 16"><path d="M0.6 1.7 Q0.6 0.7 1.6 0.7 H8.2 L11.2 3.7 V12.1 Q11.2 13.1 10.2 13.1 H1.6 Q0.6 13.1 0.6 12.1 Z" fill="#fafafa" stroke="#666" stroke-width="1"/><path d="M8.2 0.9 V3.7 H11" fill="none" stroke="#888" stroke-width="0.8"/><circle cx="10.5" cy="11.4" r="3.2" fill="#2a9ae8" stroke="#1a62b0" stroke-width="0.8"/></svg>16435611</div><div class="c" style="left:115px;width:196px;">2022.04.24 21:58:42</div><div class="c" style="left:311px;width:89px;letter-spacing:0.45px;padding-right:1.6px;">buy</div><div class="c" style="left:400px;width:71px;">1.00</div><div class="c" style="left:471px;width:89px;letter-spacing:0.45px;padding-right:1.6px;">gbpnzd</div><div class="c" style="left:560px;width:89px;">1.93319</div><div class="c" style="left:649px;width:89px;">0.00000</div><div class="c" style="left:738px;width:89px;">1.93450</div><div class="c" style="left:827px;width:196px;">2022.04.24 22:00:42</div><div class="c" style="left:1023px;width:89px;">1.93396</div><div class="c" style="left:1112px;width:89px;">0.00</div><div class="c nb" style="left:1201px;width:107px;">51.09</div></div><div class="row g" style="top:298px;"><div class="c" style="left:0px;width:115px;text-align:left;padding-left:22.4px;"><svg class="ic" viewBox="0 0 15 16"><path d="M0.6 1.7 Q0.6 0.7 1.6 0.7 H8.2 L11.2 3.7 V12.1 Q11.2 13.1 10.2 13.1 H1.6 Q0.6 13.1 0.6 12.1 Z" fill="#fafafa" stroke="#666" stroke-width="1"/><path d="M8.2 0.9 V3.7 H11" fill="none" stroke="#888" stroke-width="0.8"/><circle cx="10.5" cy="11.4" r="3.2" fill="#2a9ae8" stroke="#1a62b0" stroke-width="0.8"/></svg>16437716</div><div class="c" style="left:115px;width:196px;">2022.04.25 01:00:21</div><div class="c" style="left:311px;width:89px;letter-spacing:0.45px;padding-right:1.6px;">buy</div><div class="c" style="left:400px;width:71px;">0.30</div><div class="c" style="left:471px;width:89px;letter-spacing:0.45px;padding-right:1.6px;">xauusd</div><div class="c" style="left:560px;width:89px;">1927.72</div><div class="c" style="left:649px;width:89px;">0.00</div><div class="c" style="left:738px;width:89px;">0.00</div><div class="c" style="left:827px;width:196px;">2022.04.25 01:27:07</div><div class="c" style="left:1023px;width:89px;">1925.83</div><div class="c" style="left:1112px;width:89px;">0.00</div><div class="c nb" style="left:1201px;width:107px;">-56.70</div></div><div class="row" style="top:319px;"><div class="c" style="left:0px;width:115px;text-align:left;padding-left:22.4px;"><svg class="ic" viewBox="0 0 15 16"><path d="M0.6 1.7 Q0.6 0.7 1.6 0.7 H8.2 L11.2 3.7 V12.1 Q11.2 13.1 10.2 13.1 H1.6 Q0.6 13.1 0.6 12.1 Z" fill="#fafafa" stroke="#666" stroke-width="1"/><path d="M8.2 0.9 V3.7 H11" fill="none" stroke="#888" stroke-width="0.8"/><circle cx="10.5" cy="11.4" r="3.2" fill="#2a9ae8" stroke="#1a62b0" stroke-width="0.8"/></svg>16442957</div><div class="c" style="left:115px;width:196px;">2022.04.25 04:55:15</div><div class="c" style="left:311px;width:89px;letter-spacing:0.45px;padding-right:1.6px;">buy</div><div class="c" style="left:400px;width:71px;">0.30</div><div class="c" style="left:471px;width:89px;letter-spacing:0.45px;padding-right:1.6px;">xauusd</div><div class="c" style="left:560px;width:89px;">1917.52</div><div class="c" style="left:649px;width:89px;">0.00</div><div class="c" style="left:738px;width:89px;">1919.30</div><div class="c" style="left:827px;width:196px;">2022.04.25 05:20:19</div><div class="c" style="left:1023px;width:89px;">1918.07</div><div class="c" style="left:1112px;width:89px;">0.00</div><div class="c nb" style="left:1201px;width:107px;">16.50</div></div><div class="row g" style="top:340px;"><div class="c" style="left:0px;width:115px;text-align:left;padding-left:22.4px;"><svg class="ic" viewBox="0 0 15 16"><path d="M0.6 1.7 Q0.6 0.7 1.6 0.7 H8.2 L11.2 3.7 V12.1 Q11.2 13.1 10.2 13.1 H1.6 Q0.6 13.1 0.6 12.1 Z" fill="#fafafa" stroke="#666" stroke-width="1"/><path d="M8.2 0.9 V3.7 H11" fill="none" stroke="#888" stroke-width="0.8"/><circle cx="10.5" cy="11.4" r="3.2" fill="#ec4a1a" stroke="#a82c0c" stroke-width="0.8"/></svg>16469107</div><div class="c" style="left:115px;width:196px;">2022.04.25 21:16:22</div><div class="c" style="left:311px;width:89px;letter-spacing:0.45px;padding-right:1.6px;">sell</div><div class="c" style="left:400px;width:71px;">1.00</div><div class="c" style="left:471px;width:89px;letter-spacing:0.45px;padding-right:1.6px;">eurnzd</div><div class="c" style="left:560px;width:89px;">1.61899</div><div class="c" style="left:649px;width:89px;">0.00000</div><div class="c" style="left:738px;width:89px;">0.00000</div><div class="c" style="left:827px;width:196px;">2022.04.25 21:35:05</div><div class="c" style="left:1023px;width:89px;">1.61836</div><div class="c" style="left:1112px;width:89px;">0.00</div><div class="c nb" style="left:1201px;width:107px;">41.74</div></div><div class="row" style="top:361px;"><div class="c" style="left:0px;width:115px;text-align:left;padding-left:22.4px;"><svg class="ic" viewBox="0 0 15 16"><path d="M0.6 1.7 Q0.6 0.7 1.6 0.7 H8.2 L11.2 3.7 V12.1 Q11.2 13.1 10.2 13.1 H1.6 Q0.6 13.1 0.6 12.1 Z" fill="#fafafa" stroke="#666" stroke-width="1"/><path d="M8.2 0.9 V3.7 H11" fill="none" stroke="#888" stroke-width="0.8"/><circle cx="10.5" cy="11.4" r="3.2" fill="#ec4a1a" stroke="#a82c0c" stroke-width="0.8"/></svg>16469138</div><div class="c" style="left:115px;width:196px;">2022.04.25 21:17:19</div><div class="c" style="left:311px;width:89px;letter-spacing:0.45px;padding-right:1.6px;">sell</div><div class="c" style="left:400px;width:71px;">1.00</div><div class="c" style="left:471px;width:89px;letter-spacing:0.45px;padding-right:1.6px;">gbpnzd</div><div class="c" style="left:560px;width:89px;">1.92523</div><div class="c" style="left:649px;width:89px;">0.00000</div><div class="c" style="left:738px;width:89px;">1.92320</div><div class="c" style="left:827px;width:196px;">2022.04.25 21:26:11</div><div class="c" style="left:1023px;width:89px;">1.92594</div><div class="c" style="left:1112px;width:89px;">0.00</div><div class="c nb" style="left:1201px;width:107px;">-47.01</div></div><div class="row g" style="top:382px;"><div class="c" style="left:0px;width:115px;text-align:left;padding-left:22.4px;"><svg class="ic" viewBox="0 0 15 16"><path d="M0.6 1.7 Q0.6 0.7 1.6 0.7 H8.2 L11.2 3.7 V12.1 Q11.2 13.1 10.2 13.1 H1.6 Q0.6 13.1 0.6 12.1 Z" fill="#fafafa" stroke="#666" stroke-width="1"/><path d="M8.2 0.9 V3.7 H11" fill="none" stroke="#888" stroke-width="0.8"/><circle cx="10.5" cy="11.4" r="3.2" fill="#2a9ae8" stroke="#1a62b0" stroke-width="0.8"/></svg>16469250</div><div class="c" style="left:115px;width:196px;">2022.04.25 21:27:31</div><div class="c" style="left:311px;width:89px;letter-spacing:0.45px;padding-right:1.6px;">buy</div><div class="c" style="left:400px;width:71px;">1.00</div><div class="c" style="left:471px;width:89px;letter-spacing:0.45px;padding-right:1.6px;">gbpaud</div><div class="c" style="left:560px;width:89px;">1.77315</div><div class="c" style="left:649px;width:89px;">0.00000</div><div class="c" style="left:738px;width:89px;">0.00000</div><div class="c" style="left:827px;width:196px;">2022.04.25 21:38:31</div><div class="c" style="left:1023px;width:89px;">1.77406</div><div class="c" style="left:1112px;width:89px;">0.00</div><div class="c nb" style="left:1201px;width:107px;">65.34</div></div><div class="row" style="top:403px;"><div class="c" style="left:0px;width:115px;text-align:left;padding-left:22.4px;"><svg class="ic" viewBox="0 0 15 16"><path d="M0.6 1.7 Q0.6 0.7 1.6 0.7 H8.2 L11.2 3.7 V12.1 Q11.2 13.1 10.2 13.1 H1.6 Q0.6 13.1 0.6 12.1 Z" fill="#fafafa" stroke="#666" stroke-width="1"/><path d="M8.2 0.9 V3.7 H11" fill="none" stroke="#888" stroke-width="0.8"/><circle cx="10.5" cy="11.4" r="3.2" fill="#2a9ae8" stroke="#1a62b0" stroke-width="0.8"/></svg>16469256</div><div class="c" style="left:115px;width:196px;">2022.04.25 21:27:44</div><div class="c" style="left:311px;width:89px;letter-spacing:0.45px;padding-right:1.6px;">buy</div><div class="c" style="left:400px;width:71px;">1.00</div><div class="c" style="left:471px;width:89px;letter-spacing:0.45px;padding-right:1.6px;">gbpaud</div><div class="c" style="left:560px;width:89px;">1.77317</div><div class="c" style="left:649px;width:89px;">0.00000</div><div class="c" style="left:738px;width:89px;">0.00000</div><div class="c" style="left:827px;width:196px;">2022.04.25 21:33:48</div><div class="c" style="left:1023px;width:89px;">1.77403</div><div class="c" style="left:1112px;width:89px;">0.00</div><div class="c nb" style="left:1201px;width:107px;">61.75</div></div><div class="row g" style="top:424px;"><div class="c" style="left:0px;width:115px;text-align:left;padding-left:22.4px;"><svg class="ic" viewBox="0 0 15 16"><path d="M0.6 1.7 Q0.6 0.7 1.6 0.7 H8.2 L11.2 3.7 V12.1 Q11.2 13.1 10.2 13.1 H1.6 Q0.6 13.1 0.6 12.1 Z" fill="#fafafa" stroke="#666" stroke-width="1"/><path d="M8.2 0.9 V3.7 H11" fill="none" stroke="#888" stroke-width="0.8"/><circle cx="10.5" cy="11.4" r="3.2" fill="#2a9ae8" stroke="#1a62b0" stroke-width="0.8"/></svg>16469284</div><div class="c" style="left:115px;width:196px;">2022.04.25 21:28:58</div><div class="c" style="left:311px;width:89px;letter-spacing:0.45px;padding-right:1.6px;">buy</div><div class="c" style="left:400px;width:71px;">1.00</div><div class="c" style="left:471px;width:89px;letter-spacing:0.45px;padding-right:1.6px;">gbpaud</div><div class="c" style="left:560px;width:89px;">1.77320</div><div class="c" style="left:649px;width:89px;">0.00000</div><div class="c" style="left:738px;width:89px;">0.00000</div><div class="c" style="left:827px;width:196px;">2022.04.25 21:33:37</div><div class="c" style="left:1023px;width:89px;">1.77392</div><div class="c" style="left:1112px;width:89px;">0.00</div><div class="c nb" style="left:1201px;width:107px;">51.70</div></div><div class="row" style="top:445px;"><div class="c" style="left:0px;width:115px;text-align:left;padding-left:22.4px;"><svg class="ic" viewBox="0 0 15 16"><path d="M0.6 1.7 Q0.6 0.7 1.6 0.7 H8.2 L11.2 3.7 V12.1 Q11.2 13.1 10.2 13.1 H1.6 Q0.6 13.1 0.6 12.1 Z" fill="#fafafa" stroke="#666" stroke-width="1"/><path d="M8.2 0.9 V3.7 H11" fill="none" stroke="#888" stroke-width="0.8"/><circle cx="10.5" cy="11.4" r="3.2" fill="#2a9ae8" stroke="#1a62b0" stroke-width="0.8"/></svg>16469298</div><div class="c" style="left:115px;width:196px;">2022.04.25 21:29:38</div><div class="c" style="left:311px;width:89px;letter-spacing:0.45px;padding-right:1.6px;">buy</div><div class="c" style="left:400px;width:71px;">1.00</div><div class="c" style="left:471px;width:89px;letter-spacing:0.45px;padding-right:1.6px;">gbpaud</div><div class="c" style="left:560px;width:89px;">1.77302</div><div class="c" style="left:649px;width:89px;">0.00000</div><div class="c" style="left:738px;width:89px;">0.00000</div><div class="c" style="left:827px;width:196px;">2022.04.25 21:32:35</div><div class="c" style="left:1023px;width:89px;">1.77390</div><div class="c" style="left:1112px;width:89px;">0.00</div><div class="c nb" style="left:1201px;width:107px;">63.19</div></div><div class="row g" style="top:466px;"><div class="c" style="left:0px;width:115px;text-align:left;padding-left:22.4px;"><svg class="ic" viewBox="0 0 15 16"><path d="M0.6 1.7 Q0.6 0.7 1.6 0.7 H8.2 L11.2 3.7 V12.1 Q11.2 13.1 10.2 13.1 H1.6 Q0.6 13.1 0.6 12.1 Z" fill="#fafafa" stroke="#666" stroke-width="1"/><path d="M8.2 0.9 V3.7 H11" fill="none" stroke="#888" stroke-width="0.8"/><circle cx="10.5" cy="11.4" r="3.2" fill="#ec4a1a" stroke="#a82c0c" stroke-width="0.8"/></svg>16471636</div><div class="c" style="left:115px;width:196px;">2022.04.26 01:55:27</div><div class="c" style="left:311px;width:89px;letter-spacing:0.45px;padding-right:1.6px;">sell</div><div class="c" style="left:400px;width:71px;">0.30</div><div class="c" style="left:471px;width:89px;letter-spacing:0.45px;padding-right:1.6px;">xauusd</div><div class="c" style="left:560px;width:89px;">1899.67</div><div class="c" style="left:649px;width:89px;">0.00</div><div class="c" style="left:738px;width:89px;">1898.50</div><div class="c" style="left:827px;width:196px;">2022.04.26 02:17:27</div><div class="c" style="left:1023px;width:89px;">1901.76</div><div class="c" style="left:1112px;width:89px;">0.00</div><div class="c nb" style="left:1201px;width:107px;">-62.70</div></div><div class="row" style="top:487px;"><div class="c" style="left:0px;width:115px;text-align:left;padding-left:22.4px;"><svg class="ic" viewBox="0 0 15 16"><path d="M0.6 1.7 Q0.6 0.7 1.6 0.7 H8.2 L11.2 3.7 V12.1 Q11.2 13.1 10.2 13.1 H1.6 Q0.6 13.1 0.6 12.1 Z" fill="#fafafa" stroke="#666" stroke-width="1"/><path d="M8.2 0.9 V3.7 H11" fill="none" stroke="#888" stroke-width="0.8"/><circle cx="10.5" cy="11.4" r="3.2" fill="#ec4a1a" stroke="#a82c0c" stroke-width="0.8"/></svg>16534843</div><div class="c" style="left:115px;width:196px;">2022.04.28 07:30:41</div><div class="c" style="left:311px;width:89px;letter-spacing:0.45px;padding-right:1.6px;">sell</div><div class="c" style="left:400px;width:71px;">0.30</div><div class="c" style="left:471px;width:89px;letter-spacing:0.45px;padding-right:1.6px;">xauusd</div><div class="c" style="left:560px;width:89px;">1886.14</div><div class="c" style="left:649px;width:89px;">0.00</div><div class="c" style="left:738px;width:89px;">0.00</div><div class="c" style="left:827px;width:196px;">2022.04.28 07:37:46</div><div class="c" style="left:1023px;width:89px;">1885.44</div><div class="c" style="left:1112px;width:89px;">0.00</div><div class="c nb" style="left:1201px;width:107px;">21.00</div></div><div class="row g" style="top:508px;"><div class="c" style="left:0px;width:115px;text-align:left;padding-left:22.4px;"><svg class="ic" viewBox="0 0 15 16"><path d="M0.6 1.7 Q0.6 0.7 1.6 0.7 H8.2 L11.2 3.7 V12.1 Q11.2 13.1 10.2 13.1 H1.6 Q0.6 13.1 0.6 12.1 Z" fill="#fafafa" stroke="#666" stroke-width="1"/><path d="M8.2 0.9 V3.7 H11" fill="none" stroke="#888" stroke-width="0.8"/><circle cx="10.5" cy="11.4" r="3.2" fill="#2a9ae8" stroke="#1a62b0" stroke-width="0.8"/></svg>16554074</div><div class="c" style="left:115px;width:196px;">2022.04.28 20:58:54</div><div class="c" style="left:311px;width:89px;letter-spacing:0.45px;padding-right:1.6px;">buy</div><div class="c" style="left:400px;width:71px;">1.00</div><div class="c" style="left:471px;width:89px;letter-spacing:0.45px;padding-right:1.6px;">gbpnzd</div><div class="c" style="left:560px;width:89px;">1.92007</div><div class="c" style="left:649px;width:89px;">0.00000</div><div class="c" style="left:738px;width:89px;">1.92020</div><div class="c" style="left:827px;width:196px;">2022.04.28 22:04:03</div><div class="c" style="left:1023px;width:89px;">1.91989</div><div class="c" style="left:1112px;width:89px;">-5.18</div><div class="c nb" style="left:1201px;width:107px;">-11.67</div></div><div class="row" style="top:529px;"><div class="c" style="left:0px;width:115px;text-align:left;padding-left:22.4px;"><svg class="ic" viewBox="0 0 15 16"><path d="M0.6 1.7 Q0.6 0.7 1.6 0.7 H8.2 L11.2 3.7 V12.1 Q11.2 13.1 10.2 13.1 H1.6 Q0.6 13.1 0.6 12.1 Z" fill="#fafafa" stroke="#666" stroke-width="1"/><path d="M8.2 0.9 V3.7 H11" fill="none" stroke="#888" stroke-width="0.8"/><circle cx="10.5" cy="11.4" r="3.2" fill="#2a9ae8" stroke="#1a62b0" stroke-width="0.8"/></svg>16554245</div><div class="c" style="left:115px;width:196px;">2022.04.28 21:11:25</div><div class="c" style="left:311px;width:89px;letter-spacing:0.45px;padding-right:1.6px;">buy</div><div class="c" style="left:400px;width:71px;">0.01</div><div class="c" style="left:471px;width:89px;letter-spacing:0.45px;padding-right:1.6px;">gbpnzd</div><div class="c" style="left:560px;width:89px;">1.91922</div><div class="c" style="left:649px;width:89px;">0.00000</div><div class="c" style="left:738px;width:89px;">0.00000</div><div class="c" style="left:827px;width:196px;">2022.04.28 22:01:31</div><div class="c" style="left:1023px;width:89px;">1.91969</div><div class="c" style="left:1112px;width:89px;">0.00</div><div class="c nb" style="left:1201px;width:107px;">0.31</div></div><div class="row g" style="top:550px;"><div class="c" style="left:0px;width:115px;text-align:left;padding-left:22.4px;"><svg class="ic" viewBox="0 0 15 16"><path d="M0.6 1.7 Q0.6 0.7 1.6 0.7 H8.2 L11.2 3.7 V12.1 Q11.2 13.1 10.2 13.1 H1.6 Q0.6 13.1 0.6 12.1 Z" fill="#fafafa" stroke="#666" stroke-width="1"/><path d="M8.2 0.9 V3.7 H11" fill="none" stroke="#888" stroke-width="0.8"/><circle cx="10.5" cy="11.4" r="3.2" fill="#2a9ae8" stroke="#1a62b0" stroke-width="0.8"/></svg>16554269</div><div class="c" style="left:115px;width:196px;">2022.04.28 21:11:38</div><div class="c" style="left:311px;width:89px;letter-spacing:0.45px;padding-right:1.6px;">buy</div><div class="c" style="left:400px;width:71px;">1.00</div><div class="c" style="left:471px;width:89px;letter-spacing:0.45px;padding-right:1.6px;">gbpnzd</div><div class="c" style="left:560px;width:89px;">1.91922</div><div class="c" style="left:649px;width:89px;">0.00000</div><div class="c" style="left:738px;width:89px;"><div class="grn"></div><span style="position:relative;">1.92010</span></div><div class="c" style="left:827px;width:196px;">2022.04.28 22:03:30</div><div class="c" style="left:1023px;width:89px;">1.92016</div><div class="c" style="left:1112px;width:89px;">0.00</div><div class="c nb" style="left:1201px;width:107px;">60.96</div></div><div class="row" style="top:571px;"><div class="c" style="left:0px;width:115px;text-align:left;padding-left:22.4px;"><svg class="ic" viewBox="0 0 15 16"><path d="M0.6 1.7 Q0.6 0.7 1.6 0.7 H8.2 L11.2 3.7 V12.1 Q11.2 13.1 10.2 13.1 H1.6 Q0.6 13.1 0.6 12.1 Z" fill="#fafafa" stroke="#666" stroke-width="1"/><path d="M8.2 0.9 V3.7 H11" fill="none" stroke="#888" stroke-width="0.8"/><circle cx="10.5" cy="11.4" r="3.2" fill="#2a9ae8" stroke="#1a62b0" stroke-width="0.8"/></svg>16554309</div><div class="c" style="left:115px;width:196px;">2022.04.28 21:12:17</div><div class="c" style="left:311px;width:89px;letter-spacing:0.45px;padding-right:1.6px;">buy</div><div class="c" style="left:400px;width:71px;">1.00</div><div class="c" style="left:471px;width:89px;letter-spacing:0.45px;padding-right:1.6px;">gbpnzd</div><div class="c" style="left:560px;width:89px;">1.91942</div><div class="c" style="left:649px;width:89px;">0.00000</div><div class="c" style="left:738px;width:89px;"><div class="grn"></div><span style="position:relative;">1.91990</span></div><div class="c" style="left:827px;width:196px;">2022.04.28 22:00:50</div><div class="c" style="left:1023px;width:89px;">1.91996</div><div class="c" style="left:1112px;width:89px;">0.00</div><div class="c nb" style="left:1201px;width:107px;">35.02</div></div><div class="row g" style="top:592px;"><div class="c" style="left:0px;width:115px;text-align:left;padding-left:22.4px;"><svg class="ic" viewBox="0 0 15 16"><path d="M0.6 1.7 Q0.6 0.7 1.6 0.7 H8.2 L11.2 3.7 V12.1 Q11.2 13.1 10.2 13.1 H1.6 Q0.6 13.1 0.6 12.1 Z" fill="#fafafa" stroke="#666" stroke-width="1"/><path d="M8.2 0.9 V3.7 H11" fill="none" stroke="#888" stroke-width="0.8"/><circle cx="10.5" cy="11.4" r="3.2" fill="#2a9ae8" stroke="#1a62b0" stroke-width="0.8"/></svg>16554317</div><div class="c" style="left:115px;width:196px;">2022.04.28 21:12:40</div><div class="c" style="left:311px;width:89px;letter-spacing:0.45px;padding-right:1.6px;">buy</div><div class="c" style="left:400px;width:71px;">1.00</div><div class="c" style="left:471px;width:89px;letter-spacing:0.45px;padding-right:1.6px;">gbpnzd</div><div class="c" style="left:560px;width:89px;">1.91942</div><div class="c" style="left:649px;width:89px;">0.00000</div><div class="c" style="left:738px;width:89px;"><div class="grn"></div><span style="position:relative;">1.91980</span></div><div class="c" style="left:827px;width:196px;">2022.04.28 22:00:29</div><div class="c" style="left:1023px;width:89px;">1.91980</div><div class="c" style="left:1112px;width:89px;">0.00</div><div class="c nb" style="left:1201px;width:107px;">24.64</div></div><div class="row" style="top:613px;"><div class="c" style="left:0px;width:115px;text-align:left;padding-left:22.4px;"><svg class="ic" viewBox="0 0 15 16"><path d="M0.6 1.7 Q0.6 0.7 1.6 0.7 H8.2 L11.2 3.7 V12.1 Q11.2 13.1 10.2 13.1 H1.6 Q0.6 13.1 0.6 12.1 Z" fill="#fafafa" stroke="#666" stroke-width="1"/><path d="M8.2 0.9 V3.7 H11" fill="none" stroke="#888" stroke-width="0.8"/><circle cx="10.5" cy="11.4" r="3.2" fill="#2a9ae8" stroke="#1a62b0" stroke-width="0.8"/></svg>16554334</div><div class="c" style="left:115px;width:196px;">2022.04.28 21:13:38</div><div class="c" style="left:311px;width:89px;letter-spacing:0.45px;padding-right:1.6px;">buy</div><div class="c" style="left:400px;width:71px;">0.01</div><div class="c" style="left:471px;width:89px;letter-spacing:0.45px;padding-right:1.6px;">gbpnzd</div><div class="c" style="left:560px;width:89px;">1.91942</div><div class="c" style="left:649px;width:89px;">0.00000</div><div class="c" style="left:738px;width:89px;">0.00000</div><div class="c" style="left:827px;width:196px;">2022.04.28 22:01:32</div><div class="c" style="left:1023px;width:89px;">1.91969</div><div class="c" style="left:1112px;width:89px;">0.00</div><div class="c nb" style="left:1201px;width:107px;">0.18</div></div><div class="row g" style="top:634px;"><div class="c" style="left:0px;width:115px;text-align:left;padding-left:22.4px;"><svg class="ic" viewBox="0 0 15 16"><path d="M0.6 1.7 Q0.6 0.7 1.6 0.7 H8.2 L11.2 3.7 V12.1 Q11.2 13.1 10.2 13.1 H1.6 Q0.6 13.1 0.6 12.1 Z" fill="#fafafa" stroke="#666" stroke-width="1"/><path d="M8.2 0.9 V3.7 H11" fill="none" stroke="#888" stroke-width="0.8"/><circle cx="10.5" cy="11.4" r="3.2" fill="#2a9ae8" stroke="#1a62b0" stroke-width="0.8"/></svg>16554336</div><div class="c" style="left:115px;width:196px;">2022.04.28 21:13:43</div><div class="c" style="left:311px;width:89px;letter-spacing:0.45px;padding-right:1.6px;">buy</div><div class="c" style="left:400px;width:71px;">1.00</div><div class="c" style="left:471px;width:89px;letter-spacing:0.45px;padding-right:1.6px;">gbpnzd</div><div class="c" style="left:560px;width:89px;">1.91942</div><div class="c" style="left:649px;width:89px;">0.00000</div><div class="c" style="left:738px;width:89px;"><div class="grn"></div><span style="position:relative;">1.91970</span></div><div class="c" style="left:827px;width:196px;">2022.04.28 22:00:29</div><div class="c" style="left:1023px;width:89px;">1.91971</div><div class="c" style="left:1112px;width:89px;">0.00</div><div class="c nb" style="left:1201px;width:107px;">18.80</div></div><div class="row" style="top:655px;"><div class="c" style="left:0px;width:115px;text-align:left;padding-left:22.4px;"><svg class="ic" viewBox="0 0 15 16"><path d="M0.6 1.7 Q0.6 0.7 1.6 0.7 H8.2 L11.2 3.7 V12.1 Q11.2 13.1 10.2 13.1 H1.6 Q0.6 13.1 0.6 12.1 Z" fill="#fafafa" stroke="#666" stroke-width="1"/><path d="M8.2 0.9 V3.7 H11" fill="none" stroke="#888" stroke-width="0.8"/><circle cx="10.5" cy="11.4" r="3.2" fill="#2a9ae8" stroke="#1a62b0" stroke-width="0.8"/></svg>16554506</div><div class="c" style="left:115px;width:196px;">2022.04.28 21:16:11</div><div class="c" style="left:311px;width:89px;letter-spacing:0.45px;padding-right:1.6px;">buy</div><div class="c" style="left:400px;width:71px;">1.00</div><div class="c" style="left:471px;width:89px;letter-spacing:0.45px;padding-right:1.6px;">gbpnzd</div><div class="c" style="left:560px;width:89px;">1.91892</div><div class="c" style="left:649px;width:89px;">0.00000</div><div class="c" style="left:738px;width:89px;">1.92020</div><div class="c" style="left:827px;width:196px;">2022.04.28 22:01:11</div><div class="c" style="left:1023px;width:89px;">1.91992</div><div class="c" style="left:1112px;width:89px;">0.00</div><div class="c nb" style="left:1201px;width:107px;">64.85</div></div><div class="row g" style="top:676px;"><div class="c" style="left:0px;width:115px;text-align:left;padding-left:22.4px;"><svg class="ic" viewBox="0 0 15 16"><path d="M0.6 1.7 Q0.6 0.7 1.6 0.7 H8.2 L11.2 3.7 V12.1 Q11.2 13.1 10.2 13.1 H1.6 Q0.6 13.1 0.6 12.1 Z" fill="#fafafa" stroke="#666" stroke-width="1"/><path d="M8.2 0.9 V3.7 H11" fill="none" stroke="#888" stroke-width="0.8"/><circle cx="10.5" cy="11.4" r="3.2" fill="#2a9ae8" stroke="#1a62b0" stroke-width="0.8"/></svg>16555042</div><div class="c" style="left:115px;width:196px;">2022.04.28 21:28:26</div><div class="c" style="left:311px;width:89px;letter-spacing:0.45px;padding-right:1.6px;">buy</div><div class="c" style="left:400px;width:71px;">0.01</div><div class="c" style="left:471px;width:89px;letter-spacing:0.45px;padding-right:1.6px;">gbpnzd</div><div class="c" style="left:560px;width:89px;">1.91937</div><div class="c" style="left:649px;width:89px;">0.00000</div><div class="c" style="left:738px;width:89px;">0.00000</div><div class="c" style="left:827px;width:196px;">2022.04.28 22:01:34</div><div class="c" style="left:1023px;width:89px;">1.91969</div><div class="c" style="left:1112px;width:89px;">0.00</div><div class="c nb" style="left:1201px;width:107px;">0.21</div></div><div class="row" style="top:697px;"><div class="c" style="left:0px;width:115px;text-align:left;padding-left:22.4px;"><svg class="ic" viewBox="0 0 15 16"><path d="M0.6 1.7 Q0.6 0.7 1.6 0.7 H8.2 L11.2 3.7 V12.1 Q11.2 13.1 10.2 13.1 H1.6 Q0.6 13.1 0.6 12.1 Z" fill="#fafafa" stroke="#666" stroke-width="1"/><path d="M8.2 0.9 V3.7 H11" fill="none" stroke="#888" stroke-width="0.8"/><circle cx="10.5" cy="11.4" r="3.2" fill="#ec4a1a" stroke="#a82c0c" stroke-width="0.8"/></svg>16556610</div><div class="c" style="left:115px;width:196px;">2022.04.29 01:09:25</div><div class="c" style="left:311px;width:89px;letter-spacing:0.45px;padding-right:1.6px;">sell</div><div class="c" style="left:400px;width:71px;">0.30</div><div class="c" style="left:471px;width:89px;letter-spacing:0.45px;padding-right:1.6px;">xauusd</div><div class="c" style="left:560px;width:89px;">1901.41</div><div class="c" style="left:649px;width:89px;">0.00</div><div class="c" style="left:738px;width:89px;">0.00</div><div class="c" style="left:827px;width:196px;">2022.04.29 02:14:19</div><div class="c" style="left:1023px;width:89px;">1902.05</div><div class="c" style="left:1112px;width:89px;">0.00</div><div class="c nb" style="left:1201px;width:107px;">-19.20</div></div><div class="row g" style="top:718px;"><div class="c" style="left:0px;width:115px;text-align:left;padding-left:22.4px;"><svg class="ic" viewBox="0 0 15 16"><path d="M0.6 1.7 Q0.6 0.7 1.6 0.7 H8.2 L11.2 3.7 V12.1 Q11.2 13.1 10.2 13.1 H1.6 Q0.6 13.1 0.6 12.1 Z" fill="#fafafa" stroke="#666" stroke-width="1"/><path d="M8.2 0.9 V3.7 H11" fill="none" stroke="#888" stroke-width="0.8"/><circle cx="10.5" cy="11.4" r="3.2" fill="#ec4a1a" stroke="#a82c0c" stroke-width="0.8"/></svg>16570177</div><div class="c" style="left:115px;width:196px;">2022.04.29 12:00:41</div><div class="c" style="left:311px;width:89px;letter-spacing:0.45px;padding-right:1.6px;">sell</div><div class="c" style="left:400px;width:71px;">0.30</div><div class="c" style="left:471px;width:89px;letter-spacing:0.45px;padding-right:1.6px;">xauusd</div><div class="c" style="left:560px;width:89px;">1918.39</div><div class="c" style="left:649px;width:89px;">0.00</div><div class="c" style="left:738px;width:89px;">0.00</div><div class="c" style="left:827px;width:196px;">2022.04.29 12:04:49</div><div class="c" style="left:1023px;width:89px;">1916.85</div><div class="c" style="left:1112px;width:89px;">0.00</div><div class="c nb" style="left:1201px;width:107px;">46.20</div></div><div class="row" style="top:739px;"></div></div>
<div class="a " style="left:1334px;top:262px;width:2px;height:741px;background:#fff;"></div>
<div class="a " style="left:1336px;top:262px;width:19px;height:741px;background:#f0f0f0;"></div>
<div class="a " style="left:1334px;top:261px;width:18px;height:1px;background:#a0a0a0;"></div>
<div class="a " style="left:1336px;top:279px;width:14px;height:287px;background:#cdcdcd;"></div>
<div class="a " style="left:1352px;top:258px;width:3px;height:745px;background:#fafafa;"></div>
<div class="a " style="left:1355px;top:237px;width:1px;height:766px;background:#1c1412;"></div>
<svg class="a" style="left:1334px;top:262px" width="17" height="17" viewBox="0 0 17 17"><path d="M4.5 10.5 L8.5 6.5 L12.5 10.5" fill="none" stroke="#505050" stroke-width="1.6"/></svg>
<svg class="a" style="left:1334px;top:986px" width="17" height="17" viewBox="0 0 17 17"><path d="M4.5 6.5 L8.5 10.5 L12.5 6.5" fill="none" stroke="#505050" stroke-width="1.6"/></svg>
<div class="wm" style="left:84px;top:27px;"><i>FX</i><b>110网</b></div>
<div class="wm" style="left:354px;top:27px;"><i>FX</i><b>110网</b></div>
<div class="wm" style="left:624px;top:27px;"><i>FX</i><b>110网</b></div>
<div class="wm" style="left:894px;top:27px;"><i>FX</i><b>110网</b></div>
<div class="wm" style="left:1164px;top:27px;"><i>FX</i><b>110网</b></div>
<div class="wm" style="left:84px;top:251px;"><i>FX</i><b>110网</b></div>
<div class="wm" style="left:354px;top:257px;"><i>FX</i><b>110网</b></div>
<div class="wm" style="left:624px;top:257px;"><i>FX</i><b>110网</b></div>
<div class="wm" style="left:894px;top:257px;"><i>FX</i><b>110网</b></div>
<div class="wm" style="left:1164px;top:257px;"><i>FX</i><b>110网</b></div>
<div class="wm" style="left:84px;top:475px;"><i>FX</i><b>110网</b></div>
<div class="wm" style="left:354px;top:475px;"><i>FX</i><b>110网</b></div>
<div class="wm" style="left:624px;top:475px;"><i>FX</i><b>110网</b></div>
<div class="wm" style="left:894px;top:475px;"><i>FX</i><b>110网</b></div>
<div class="wm" style="left:1164px;top:475px;"><i>FX</i><b>110网</b></div>
<div class="wm" style="left:84px;top:698px;"><i>FX</i><b>110网</b></div>
<div class="wm" style="left:354px;top:698px;"><i>FX</i><b>110网</b></div>
<div class="wm" style="left:624px;top:698px;"><i>FX</i><b>110网</b></div>
<div class="wm" style="left:894px;top:698px;"><i>FX</i><b>110网</b></div>
<div class="wm" style="left:1164px;top:698px;"><i>FX</i><b>110网</b></div>
<div class="wm" style="left:84px;top:919px;"><i>FX</i><b>110网</b></div>
<div class="wm" style="left:354px;top:919px;"><i>FX</i><b>110网</b></div>
<div class="wm" style="left:624px;top:919px;"><i>FX</i><b>110网</b></div>
<div class="wm" style="left:894px;top:919px;"><i>FX</i><b>110网</b></div>
<div class="wm" style="left:1164px;top:919px;"><i>FX</i><b>110网</b></div>
<div class="act" style="left:1100px;top:941px;font-size:20.4px;line-height:24px;">激活 Windows</div>
<div class="act" style="left:1100px;top:967px;font-size:14px;line-height:18px;font-family:'Noto Sans CJK SC','Liberation Sans',sans-serif;">转到“设置”以激活 Windows。</div>
</body></html>
